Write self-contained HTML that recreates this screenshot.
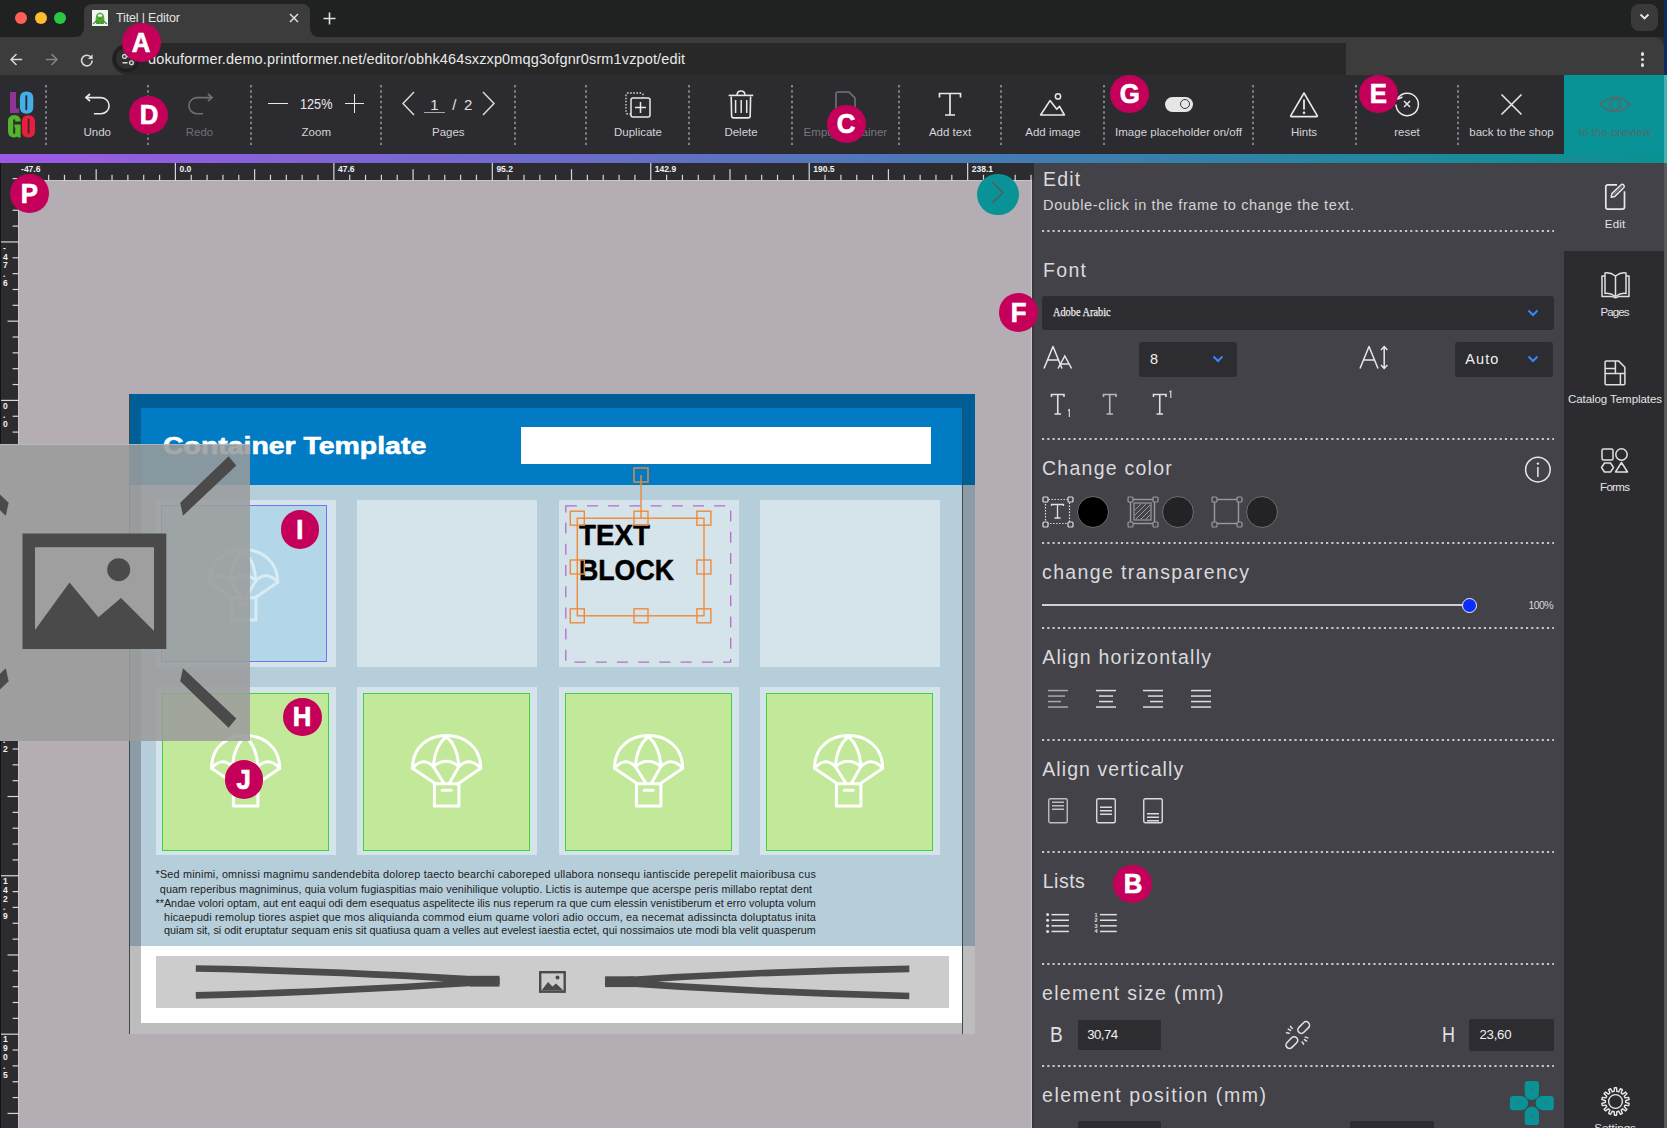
<!DOCTYPE html><html><head><meta charset="utf-8"><style>html,body{margin:0;padding:0;width:1667px;height:1128px;overflow:hidden;position:relative;background:#2c2b30;}</style></head><body><div style="position:absolute;left:0px;top:0px;width:1667px;height:37px;background:#202221;"></div>
<div style="position:absolute;left:1664px;top:0px;width:3px;height:75px;background:#0d2a63;"></div>
<div style="position:absolute;left:15.100000000000001px;top:12.0px;width:12.4px;height:12.4px;border-radius:50%;background:#fe5f57"></div>
<div style="position:absolute;left:34.599999999999994px;top:12.0px;width:12.4px;height:12.4px;border-radius:50%;background:#febc2e"></div>
<div style="position:absolute;left:54.099999999999994px;top:12.0px;width:12.4px;height:12.4px;border-radius:50%;background:#28c840"></div>
<svg style="position:absolute;left:70px;top:0px;" width="256" height="37" viewBox="0 0 256 37"><path d="M4 37 Q14 37 14 27 L14 12 Q14 4 23 4 L231 4 Q240 4 240 12 L240 27 Q240 37 250 37 Z" fill="#3c3c3c"/></svg>
<svg style="position:absolute;left:92px;top:10px;" width="16" height="16" viewBox="0 0 16 16"><rect x="0" y="0" width="16" height="16" fill="#f4f4f4"/><path d="M4 14 Q3 6 5 4 Q8 1 11 4 Q13 6 12 14 Z" fill="#4caf3a"/><path d="M1 14 Q4 12 5 10 M15 14 Q12 12 11 10 M6 14 L6.5 11 M10 14 L9.5 11" stroke="#3c8c2c" stroke-width="1.3" fill="none"/><ellipse cx="8" cy="5.5" rx="2.3" ry="1.2" fill="#fff"/><circle cx="8" cy="8.6" r="0.9" fill="#d22"/></svg>
<div style="position:absolute;left:116.00px;top:11.98px;font-family:'Liberation Sans',sans-serif;font-size:12.5px;line-height:12.5px;font-weight:400;color:#e3e3e3;white-space:pre;letter-spacing:-0.154px;">Titel | Editor</div>
<svg style="position:absolute;left:289px;top:12.6px;" width="10" height="10" viewBox="0 0 10 10"><path d="M1 1 L9 9 M9 1 L1 9" stroke="#e0e0e0" stroke-width="1.5"/></svg>
<svg style="position:absolute;left:322.5px;top:11.5px;" width="13" height="13" viewBox="0 0 13 13"><path d="M6.5 0.5 V12.5 M0.5 6.5 H12.5" stroke="#e0e0e0" stroke-width="1.6"/></svg>
<div style="position:absolute;left:1631px;top:4px;width:27px;height:27px;border-radius:8px;background:#3a3a3a"></div>
<svg style="position:absolute;left:1639px;top:13px;" width="11" height="8" viewBox="0 0 11 8"><path d="M1.5 1.5 L5.5 5.5 L9.5 1.5" stroke="#e8e8e8" stroke-width="1.8" fill="none"/></svg>
<div style="position:absolute;left:0;top:37px;width:1664px;height:38px;background:#3c3c3c;border-top-right-radius:10px"></div>
<svg style="position:absolute;left:10px;top:53px;" width="13" height="13" viewBox="0 0 13 13"><path d="M12.2 6.5 H1.5 M6.5 1 L1 6.5 L6.5 12" stroke="#d8d8d8" stroke-width="1.5" fill="none"/></svg>
<svg style="position:absolute;left:44.8px;top:53px;" width="13" height="13" viewBox="0 0 13 13"><path d="M0.8 6.5 H11.5 M6.5 1 L12 6.5 L6.5 12" stroke="#858585" stroke-width="1.5" fill="none"/></svg>
<svg style="position:absolute;left:79.5px;top:53px;" width="14" height="14" viewBox="0 0 14 14"><path d="M11.3 4.6 A5.3 5.3 0 1 0 12.2 7.6" stroke="#d8d8d8" stroke-width="1.6" fill="none"/><path d="M12.6 1.2 L12.6 5.9 L7.9 5.9 Z" fill="#d8d8d8"/></svg>
<div style="position:absolute;left:112px;top:43px;width:1234px;height:32px;background:#282828;border-top-left-radius:16px;border-bottom-left-radius:16px"></div>
<div style="position:absolute;left:112.5px;top:45px;width:27px;height:27px;box-sizing:border-box;border-radius:50%;background:#303030;border:3px solid #1f1f1f"></div>
<svg style="position:absolute;left:121px;top:53px;" width="15" height="13" viewBox="0 0 15 13"><path d="M6 3.4 H11 M1.5 9.8 H6.5" stroke="#d8d8d8" stroke-width="1.5"/><circle cx="3.4" cy="3.4" r="1.9" stroke="#d8d8d8" stroke-width="1.3" fill="none"/><circle cx="10.4" cy="9.8" r="1.9" stroke="#d8d8d8" stroke-width="1.3" fill="none"/></svg>
<div style="position:absolute;left:148.00px;top:51.77px;font-family:'Liberation Sans',sans-serif;font-size:14.5px;line-height:14.5px;font-weight:400;color:#e8e8e8;white-space:pre;letter-spacing:0.132px;">dokuformer.demo.printformer.net/editor/obhk464sxzxp0mqg3ofgnr0srm1vzpot/edit</div>
<div style="position:absolute;left:1640.8px;top:52.2px;width:3.6px;height:3.6px;border-radius:50%;background:#e0e0e0"></div>
<div style="position:absolute;left:1640.8px;top:57.900000000000006px;width:3.6px;height:3.6px;border-radius:50%;background:#e0e0e0"></div>
<div style="position:absolute;left:1640.8px;top:63.3px;width:3.6px;height:3.6px;border-radius:50%;background:#e0e0e0"></div>
<div style="position:absolute;left:0px;top:75px;width:1664px;height:79px;background:#2c2b30;"></div>
<div style="position:absolute;left:1664px;top:75px;width:3px;height:88px;background:#46b2ae;"></div>
<svg style="position:absolute;left:45px;top:84.9px;" width="2" height="60" viewBox="0 0 2 60"><g fill="#97979b"><rect x="0.2" y="0.00" width="1.6" height="2.4"/><rect x="0.2" y="5.25" width="1.6" height="2.4"/><rect x="0.2" y="10.50" width="1.6" height="2.4"/><rect x="0.2" y="15.75" width="1.6" height="2.4"/><rect x="0.2" y="21.00" width="1.6" height="2.4"/><rect x="0.2" y="26.25" width="1.6" height="2.4"/><rect x="0.2" y="31.50" width="1.6" height="2.4"/><rect x="0.2" y="36.75" width="1.6" height="2.4"/><rect x="0.2" y="42.00" width="1.6" height="2.4"/><rect x="0.2" y="47.25" width="1.6" height="2.4"/><rect x="0.2" y="52.50" width="1.6" height="2.4"/><rect x="0.2" y="57.75" width="1.6" height="2.4"/></g></svg>
<svg style="position:absolute;left:147.3px;top:84.9px;" width="2" height="60" viewBox="0 0 2 60"><g fill="#97979b"><rect x="0.2" y="0.00" width="1.6" height="2.4"/><rect x="0.2" y="5.25" width="1.6" height="2.4"/><rect x="0.2" y="10.50" width="1.6" height="2.4"/><rect x="0.2" y="15.75" width="1.6" height="2.4"/><rect x="0.2" y="21.00" width="1.6" height="2.4"/><rect x="0.2" y="26.25" width="1.6" height="2.4"/><rect x="0.2" y="31.50" width="1.6" height="2.4"/><rect x="0.2" y="36.75" width="1.6" height="2.4"/><rect x="0.2" y="42.00" width="1.6" height="2.4"/><rect x="0.2" y="47.25" width="1.6" height="2.4"/><rect x="0.2" y="52.50" width="1.6" height="2.4"/><rect x="0.2" y="57.75" width="1.6" height="2.4"/></g></svg>
<svg style="position:absolute;left:250.4px;top:84.9px;" width="2" height="60" viewBox="0 0 2 60"><g fill="#97979b"><rect x="0.2" y="0.00" width="1.6" height="2.4"/><rect x="0.2" y="5.25" width="1.6" height="2.4"/><rect x="0.2" y="10.50" width="1.6" height="2.4"/><rect x="0.2" y="15.75" width="1.6" height="2.4"/><rect x="0.2" y="21.00" width="1.6" height="2.4"/><rect x="0.2" y="26.25" width="1.6" height="2.4"/><rect x="0.2" y="31.50" width="1.6" height="2.4"/><rect x="0.2" y="36.75" width="1.6" height="2.4"/><rect x="0.2" y="42.00" width="1.6" height="2.4"/><rect x="0.2" y="47.25" width="1.6" height="2.4"/><rect x="0.2" y="52.50" width="1.6" height="2.4"/><rect x="0.2" y="57.75" width="1.6" height="2.4"/></g></svg>
<svg style="position:absolute;left:380.3px;top:84.9px;" width="2" height="60" viewBox="0 0 2 60"><g fill="#97979b"><rect x="0.2" y="0.00" width="1.6" height="2.4"/><rect x="0.2" y="5.25" width="1.6" height="2.4"/><rect x="0.2" y="10.50" width="1.6" height="2.4"/><rect x="0.2" y="15.75" width="1.6" height="2.4"/><rect x="0.2" y="21.00" width="1.6" height="2.4"/><rect x="0.2" y="26.25" width="1.6" height="2.4"/><rect x="0.2" y="31.50" width="1.6" height="2.4"/><rect x="0.2" y="36.75" width="1.6" height="2.4"/><rect x="0.2" y="42.00" width="1.6" height="2.4"/><rect x="0.2" y="47.25" width="1.6" height="2.4"/><rect x="0.2" y="52.50" width="1.6" height="2.4"/><rect x="0.2" y="57.75" width="1.6" height="2.4"/></g></svg>
<svg style="position:absolute;left:514px;top:84.9px;" width="2" height="60" viewBox="0 0 2 60"><g fill="#97979b"><rect x="0.2" y="0.00" width="1.6" height="2.4"/><rect x="0.2" y="5.25" width="1.6" height="2.4"/><rect x="0.2" y="10.50" width="1.6" height="2.4"/><rect x="0.2" y="15.75" width="1.6" height="2.4"/><rect x="0.2" y="21.00" width="1.6" height="2.4"/><rect x="0.2" y="26.25" width="1.6" height="2.4"/><rect x="0.2" y="31.50" width="1.6" height="2.4"/><rect x="0.2" y="36.75" width="1.6" height="2.4"/><rect x="0.2" y="42.00" width="1.6" height="2.4"/><rect x="0.2" y="47.25" width="1.6" height="2.4"/><rect x="0.2" y="52.50" width="1.6" height="2.4"/><rect x="0.2" y="57.75" width="1.6" height="2.4"/></g></svg>
<svg style="position:absolute;left:585.4px;top:84.9px;" width="2" height="60" viewBox="0 0 2 60"><g fill="#97979b"><rect x="0.2" y="0.00" width="1.6" height="2.4"/><rect x="0.2" y="5.25" width="1.6" height="2.4"/><rect x="0.2" y="10.50" width="1.6" height="2.4"/><rect x="0.2" y="15.75" width="1.6" height="2.4"/><rect x="0.2" y="21.00" width="1.6" height="2.4"/><rect x="0.2" y="26.25" width="1.6" height="2.4"/><rect x="0.2" y="31.50" width="1.6" height="2.4"/><rect x="0.2" y="36.75" width="1.6" height="2.4"/><rect x="0.2" y="42.00" width="1.6" height="2.4"/><rect x="0.2" y="47.25" width="1.6" height="2.4"/><rect x="0.2" y="52.50" width="1.6" height="2.4"/><rect x="0.2" y="57.75" width="1.6" height="2.4"/></g></svg>
<svg style="position:absolute;left:688.4px;top:84.9px;" width="2" height="60" viewBox="0 0 2 60"><g fill="#97979b"><rect x="0.2" y="0.00" width="1.6" height="2.4"/><rect x="0.2" y="5.25" width="1.6" height="2.4"/><rect x="0.2" y="10.50" width="1.6" height="2.4"/><rect x="0.2" y="15.75" width="1.6" height="2.4"/><rect x="0.2" y="21.00" width="1.6" height="2.4"/><rect x="0.2" y="26.25" width="1.6" height="2.4"/><rect x="0.2" y="31.50" width="1.6" height="2.4"/><rect x="0.2" y="36.75" width="1.6" height="2.4"/><rect x="0.2" y="42.00" width="1.6" height="2.4"/><rect x="0.2" y="47.25" width="1.6" height="2.4"/><rect x="0.2" y="52.50" width="1.6" height="2.4"/><rect x="0.2" y="57.75" width="1.6" height="2.4"/></g></svg>
<svg style="position:absolute;left:791.3px;top:84.9px;" width="2" height="60" viewBox="0 0 2 60"><g fill="#97979b"><rect x="0.2" y="0.00" width="1.6" height="2.4"/><rect x="0.2" y="5.25" width="1.6" height="2.4"/><rect x="0.2" y="10.50" width="1.6" height="2.4"/><rect x="0.2" y="15.75" width="1.6" height="2.4"/><rect x="0.2" y="21.00" width="1.6" height="2.4"/><rect x="0.2" y="26.25" width="1.6" height="2.4"/><rect x="0.2" y="31.50" width="1.6" height="2.4"/><rect x="0.2" y="36.75" width="1.6" height="2.4"/><rect x="0.2" y="42.00" width="1.6" height="2.4"/><rect x="0.2" y="47.25" width="1.6" height="2.4"/><rect x="0.2" y="52.50" width="1.6" height="2.4"/><rect x="0.2" y="57.75" width="1.6" height="2.4"/></g></svg>
<svg style="position:absolute;left:897.8px;top:84.9px;" width="2" height="60" viewBox="0 0 2 60"><g fill="#97979b"><rect x="0.2" y="0.00" width="1.6" height="2.4"/><rect x="0.2" y="5.25" width="1.6" height="2.4"/><rect x="0.2" y="10.50" width="1.6" height="2.4"/><rect x="0.2" y="15.75" width="1.6" height="2.4"/><rect x="0.2" y="21.00" width="1.6" height="2.4"/><rect x="0.2" y="26.25" width="1.6" height="2.4"/><rect x="0.2" y="31.50" width="1.6" height="2.4"/><rect x="0.2" y="36.75" width="1.6" height="2.4"/><rect x="0.2" y="42.00" width="1.6" height="2.4"/><rect x="0.2" y="47.25" width="1.6" height="2.4"/><rect x="0.2" y="52.50" width="1.6" height="2.4"/><rect x="0.2" y="57.75" width="1.6" height="2.4"/></g></svg>
<svg style="position:absolute;left:1000.4px;top:84.9px;" width="2" height="60" viewBox="0 0 2 60"><g fill="#97979b"><rect x="0.2" y="0.00" width="1.6" height="2.4"/><rect x="0.2" y="5.25" width="1.6" height="2.4"/><rect x="0.2" y="10.50" width="1.6" height="2.4"/><rect x="0.2" y="15.75" width="1.6" height="2.4"/><rect x="0.2" y="21.00" width="1.6" height="2.4"/><rect x="0.2" y="26.25" width="1.6" height="2.4"/><rect x="0.2" y="31.50" width="1.6" height="2.4"/><rect x="0.2" y="36.75" width="1.6" height="2.4"/><rect x="0.2" y="42.00" width="1.6" height="2.4"/><rect x="0.2" y="47.25" width="1.6" height="2.4"/><rect x="0.2" y="52.50" width="1.6" height="2.4"/><rect x="0.2" y="57.75" width="1.6" height="2.4"/></g></svg>
<svg style="position:absolute;left:1103.2px;top:84.9px;" width="2" height="60" viewBox="0 0 2 60"><g fill="#97979b"><rect x="0.2" y="0.00" width="1.6" height="2.4"/><rect x="0.2" y="5.25" width="1.6" height="2.4"/><rect x="0.2" y="10.50" width="1.6" height="2.4"/><rect x="0.2" y="15.75" width="1.6" height="2.4"/><rect x="0.2" y="21.00" width="1.6" height="2.4"/><rect x="0.2" y="26.25" width="1.6" height="2.4"/><rect x="0.2" y="31.50" width="1.6" height="2.4"/><rect x="0.2" y="36.75" width="1.6" height="2.4"/><rect x="0.2" y="42.00" width="1.6" height="2.4"/><rect x="0.2" y="47.25" width="1.6" height="2.4"/><rect x="0.2" y="52.50" width="1.6" height="2.4"/><rect x="0.2" y="57.75" width="1.6" height="2.4"/></g></svg>
<svg style="position:absolute;left:1251.5px;top:84.9px;" width="2" height="60" viewBox="0 0 2 60"><g fill="#97979b"><rect x="0.2" y="0.00" width="1.6" height="2.4"/><rect x="0.2" y="5.25" width="1.6" height="2.4"/><rect x="0.2" y="10.50" width="1.6" height="2.4"/><rect x="0.2" y="15.75" width="1.6" height="2.4"/><rect x="0.2" y="21.00" width="1.6" height="2.4"/><rect x="0.2" y="26.25" width="1.6" height="2.4"/><rect x="0.2" y="31.50" width="1.6" height="2.4"/><rect x="0.2" y="36.75" width="1.6" height="2.4"/><rect x="0.2" y="42.00" width="1.6" height="2.4"/><rect x="0.2" y="47.25" width="1.6" height="2.4"/><rect x="0.2" y="52.50" width="1.6" height="2.4"/><rect x="0.2" y="57.75" width="1.6" height="2.4"/></g></svg>
<svg style="position:absolute;left:1354.6px;top:84.9px;" width="2" height="60" viewBox="0 0 2 60"><g fill="#97979b"><rect x="0.2" y="0.00" width="1.6" height="2.4"/><rect x="0.2" y="5.25" width="1.6" height="2.4"/><rect x="0.2" y="10.50" width="1.6" height="2.4"/><rect x="0.2" y="15.75" width="1.6" height="2.4"/><rect x="0.2" y="21.00" width="1.6" height="2.4"/><rect x="0.2" y="26.25" width="1.6" height="2.4"/><rect x="0.2" y="31.50" width="1.6" height="2.4"/><rect x="0.2" y="36.75" width="1.6" height="2.4"/><rect x="0.2" y="42.00" width="1.6" height="2.4"/><rect x="0.2" y="47.25" width="1.6" height="2.4"/><rect x="0.2" y="52.50" width="1.6" height="2.4"/><rect x="0.2" y="57.75" width="1.6" height="2.4"/></g></svg>
<svg style="position:absolute;left:1457.3px;top:84.9px;" width="2" height="60" viewBox="0 0 2 60"><g fill="#97979b"><rect x="0.2" y="0.00" width="1.6" height="2.4"/><rect x="0.2" y="5.25" width="1.6" height="2.4"/><rect x="0.2" y="10.50" width="1.6" height="2.4"/><rect x="0.2" y="15.75" width="1.6" height="2.4"/><rect x="0.2" y="21.00" width="1.6" height="2.4"/><rect x="0.2" y="26.25" width="1.6" height="2.4"/><rect x="0.2" y="31.50" width="1.6" height="2.4"/><rect x="0.2" y="36.75" width="1.6" height="2.4"/><rect x="0.2" y="42.00" width="1.6" height="2.4"/><rect x="0.2" y="47.25" width="1.6" height="2.4"/><rect x="0.2" y="52.50" width="1.6" height="2.4"/><rect x="0.2" y="57.75" width="1.6" height="2.4"/></g></svg>
<svg style="position:absolute;left:0px;top:85px;" width="40" height="56" viewBox="0 0 40 56"><g transform="translate(0,-85)"><path d="M10 92 H16 V108.6 H19.1 V113.1 H10 Z" fill="#8b3696"/><path fill-rule="evenodd" fill="#45aee8" d="M26.6 91.5 Q33.3 91.5 33.3 98 V107.3 Q33.3 113.8 26.6 113.8 Q19.9 113.8 19.9 107.3 V98 Q19.9 91.5 26.6 91.5 Z M26.35 95 Q25.4 95 25.4 96.5 V108.8 Q25.4 110.3 26.35 110.3 Q27.3 110.3 27.3 108.8 V96.5 Q27.3 95 26.35 95 Z"/><path fill-rule="evenodd" fill="#55b52a" d="M14.3 115 Q20.6 115 20.6 121.5 V121.6 H15.2 V119.5 H13.2 V133.7 H15.2 V127.5 H14.5 V124.5 H20.6 V137.4 H17.8 L17.5 136.3 Q16.5 137.6 14 137.4 Q8 137.4 8 131 V121.5 Q8 115 14.3 115 Z"/><path fill-rule="evenodd" fill="#ea1e3c" d="M28.45 115.3 Q35 115.3 35 121.8 V131 Q35 137.4 28.45 137.4 Q21.9 137.4 21.9 131 V121.8 Q21.9 115.3 28.45 115.3 Z M28.6 118.6 Q27.7 118.6 27.7 120 V132.6 Q27.7 134 28.6 134 Q29.5 134 29.5 132.6 V120 Q29.5 118.6 28.6 118.6 Z"/></g></svg>
<svg style="position:absolute;left:84px;top:90px;" width="28" height="28" viewBox="0 0 28 28"><path d="M3 7.6 H17 A8.1 8.1 0 0 1 17 23.8 H9.9" stroke="#e8e8e8" stroke-width="1.6" fill="none"/><path d="M6 4 L2 7.6 L6 11.2" stroke="#e8e8e8" stroke-width="1.8" fill="none" stroke-linejoin="miter"/></svg>
<div style="position:absolute;left:83.45px;top:126.53px;font-family:'Liberation Sans',sans-serif;font-size:11.5px;line-height:11.5px;font-weight:400;color:#d4d4d6;white-space:pre;letter-spacing:0.000px;">Undo</div>
<svg style="position:absolute;left:187px;top:90px;" width="28" height="28" viewBox="0 0 28 28"><path d="M24 7.6 H10 A8.1 8.1 0 0 0 10 23.8 H16" stroke="#6f6f74" stroke-width="1.6" fill="none"/><path d="M21 4 L25 7.6 L21 11.2" stroke="#6f6f74" stroke-width="1.8" fill="none"/></svg>
<div style="position:absolute;left:185.75px;top:126.53px;font-family:'Liberation Sans',sans-serif;font-size:11.5px;line-height:11.5px;font-weight:400;color:#6f6f74;white-space:pre;letter-spacing:0.000px;">Redo</div>
<div style="position:absolute;left:267.6px;top:102.8px;width:20.2px;height:1.5px;background:#e8e8e8;"></div>
<div style="position:absolute;left:299.90px;top:96.23px;font-family:'Liberation Sans',sans-serif;font-size:15.5px;line-height:15.5px;font-weight:400;color:#e8e8e8;white-space:pre;letter-spacing:0.000px;transform:scaleX(0.8170);transform-origin:left;">125%</div>
<div style="position:absolute;left:344.9px;top:102.8px;width:19.3px;height:1.5px;background:#e8e8e8;"></div>
<div style="position:absolute;left:353.8px;top:93.5px;width:1.5px;height:19.8px;background:#e8e8e8;"></div>
<div style="position:absolute;left:301.60px;top:126.53px;font-family:'Liberation Sans',sans-serif;font-size:11.5px;line-height:11.5px;font-weight:400;color:#d4d4d6;white-space:pre;letter-spacing:0.000px;">Zoom</div>
<svg style="position:absolute;left:400px;top:90px;" width="17" height="27" viewBox="0 0 17 27"><path d="M14 2 L3 13.5 L14 25" stroke="#d8d8d8" stroke-width="1.5" fill="none"/></svg>
<div style="position:absolute;left:430.23px;top:96.65px;font-family:'Liberation Sans',sans-serif;font-size:15px;line-height:15px;font-weight:400;color:#e0e0e0;white-space:pre;letter-spacing:0.000px;">1</div>
<div style="position:absolute;left:423.8px;top:111.8px;width:21px;height:1px;background:#a8a8a8;"></div>
<div style="position:absolute;left:452.21px;top:96.65px;font-family:'Liberation Sans',sans-serif;font-size:15px;line-height:15px;font-weight:400;color:#e0e0e0;white-space:pre;letter-spacing:0.000px;">/</div>
<div style="position:absolute;left:464.03px;top:96.65px;font-family:'Liberation Sans',sans-serif;font-size:15px;line-height:15px;font-weight:400;color:#e0e0e0;white-space:pre;letter-spacing:0.000px;">2</div>
<svg style="position:absolute;left:479.5px;top:90px;" width="17" height="27" viewBox="0 0 17 27"><path d="M3 2 L14 13.5 L3 25" stroke="#d8d8d8" stroke-width="1.5" fill="none"/></svg>
<div style="position:absolute;left:432.00px;top:126.53px;font-family:'Liberation Sans',sans-serif;font-size:11.5px;line-height:11.5px;font-weight:400;color:#d4d4d6;white-space:pre;letter-spacing:0.000px;">Pages</div>
<svg style="position:absolute;left:623px;top:90px;" width="30" height="29" viewBox="0 0 30 29"><path d="M8 24 H5 Q3 24 3 22 V5 Q3 3 5 3 H18 Q20 3 20 5 V8" stroke="#e0e0e0" stroke-width="1.3" stroke-dasharray="1.5 1.6" fill="none"/><rect x="8" y="8" width="19" height="19" rx="2" stroke="#e8e8e8" stroke-width="1.5" fill="none"/><path d="M17.5 12 V23 M12 17.5 H23" stroke="#e8e8e8" stroke-width="1.5"/></svg>
<div style="position:absolute;left:614.02px;top:126.53px;font-family:'Liberation Sans',sans-serif;font-size:11.5px;line-height:11.5px;font-weight:400;color:#d4d4d6;white-space:pre;letter-spacing:0.000px;">Duplicate</div>
<svg style="position:absolute;left:727px;top:89px;" width="28" height="31" viewBox="0 0 28 31"><path d="M1.6 6.4 H26.2" stroke="#e8e8e8" stroke-width="1.6"/><path d="M10 6.2 Q10 1.9 14 1.9 Q18 1.9 18 6.2" stroke="#e8e8e8" stroke-width="1.5" fill="none"/><path d="M4.2 7.4 L4.6 26.8 Q4.6 28.9 6.7 28.9 H21.1 Q23.2 28.9 23.2 26.8 L23.6 7.4" stroke="#e8e8e8" stroke-width="1.6" fill="none"/><path d="M8.6 10.9 V23.9 M14.2 10.9 V23.9 M19.7 10.9 V23.9" stroke="#e8e8e8" stroke-width="1.5"/></svg>
<div style="position:absolute;left:724.38px;top:126.53px;font-family:'Liberation Sans',sans-serif;font-size:11.5px;line-height:11.5px;font-weight:400;color:#d4d4d6;white-space:pre;letter-spacing:0.000px;">Delete</div>
<svg style="position:absolute;left:833px;top:90px;" width="25" height="30" viewBox="0 0 25 30"><path d="M3 28 V4 Q3 2 5 2 H16 L22 8 V28" stroke="#77767b" stroke-width="1.5" fill="none"/></svg>
<div style="position:absolute;left:803.60px;top:126.53px;font-family:'Liberation Sans',sans-serif;font-size:11.5px;line-height:11.5px;font-weight:400;color:#77767b;white-space:pre;letter-spacing:0.035px;">Empty container</div>
<svg style="position:absolute;left:936px;top:90px;" width="28" height="28" viewBox="0 0 28 28"><path d="M3.5 7.5 V3.5 H24.5 V7.5 M14 3.5 V25 M9 25 H19" stroke="#e8e8e8" stroke-width="1.7" fill="none"/></svg>
<div style="position:absolute;left:928.90px;top:126.53px;font-family:'Liberation Sans',sans-serif;font-size:11.5px;line-height:11.5px;font-weight:400;color:#d4d4d6;white-space:pre;letter-spacing:0.000px;">Add text</div>
<svg style="position:absolute;left:1038px;top:91px;" width="30" height="27" viewBox="0 0 30 27"><path d="M2.6 24 L12 9.6 L18.8 18.2 L21.5 15.3 L26.4 24 Z" stroke="#e8e8e8" stroke-width="1.6" fill="none" stroke-linejoin="round"/><circle cx="20" cy="5.4" r="2.6" stroke="#e8e8e8" stroke-width="1.5" fill="none"/></svg>
<div style="position:absolute;left:1025.31px;top:126.53px;font-family:'Liberation Sans',sans-serif;font-size:11.5px;line-height:11.5px;font-weight:400;color:#d4d4d6;white-space:pre;letter-spacing:0.000px;">Add image</div>
<div style="position:absolute;left:1164.7px;top:96.8px;width:28px;height:15px;border-radius:7.5px;background:#e6e6e6"></div>
<div style="position:absolute;left:1179.7px;top:98.7px;width:8px;height:8px;border-radius:50%;border:1.6px solid #3a3a3f;background:#e6e6e6"></div>
<div style="position:absolute;left:1115.00px;top:126.53px;font-family:'Liberation Sans',sans-serif;font-size:11.5px;line-height:11.5px;font-weight:400;color:#d4d4d6;white-space:pre;letter-spacing:0.026px;">Image placeholder on/off</div>
<svg style="position:absolute;left:1288px;top:90px;" width="32" height="29" viewBox="0 0 32 29"><path d="M16 3 L29.2 25.6 Q29.7 26.6 28.5 26.6 H3.5 Q2.3 26.6 2.8 25.6 Z" stroke="#e8e8e8" stroke-width="1.6" fill="none" stroke-linejoin="round"/><path d="M16 9.6 V19.6" stroke="#e8e8e8" stroke-width="1.8"/><circle cx="16" cy="22.8" r="1.3" fill="#e8e8e8"/></svg>
<div style="position:absolute;left:1290.90px;top:126.53px;font-family:'Liberation Sans',sans-serif;font-size:11.5px;line-height:11.5px;font-weight:400;color:#d4d4d6;white-space:pre;letter-spacing:0.000px;">Hints</div>
<svg style="position:absolute;left:1393px;top:91px;" width="28" height="28" viewBox="0 0 28 28"><path d="M5 7 A11.2 11.2 0 1 1 3 13.5" stroke="#e8e8e8" stroke-width="1.5" fill="none"/><path d="M2 3.5 L4.8 8 L9.5 6" stroke="#e8e8e8" stroke-width="1.5" fill="none"/><path d="M11 10 L17 16 M17 10 L11 16" stroke="#e8e8e8" stroke-width="1.5"/></svg>
<div style="position:absolute;left:1394.21px;top:126.53px;font-family:'Liberation Sans',sans-serif;font-size:11.5px;line-height:11.5px;font-weight:400;color:#d4d4d6;white-space:pre;letter-spacing:0.000px;">reset</div>
<svg style="position:absolute;left:1500px;top:93px;" width="23" height="23" viewBox="0 0 23 23"><path d="M1.5 1.5 L21.5 21.5 M21.5 1.5 L1.5 21.5" stroke="#e8e8e8" stroke-width="1.6"/></svg>
<div style="position:absolute;left:1469.30px;top:126.53px;font-family:'Liberation Sans',sans-serif;font-size:11.5px;line-height:11.5px;font-weight:400;color:#d4d4d6;white-space:pre;letter-spacing:-0.000px;">back to the shop</div>
<div style="position:absolute;left:1564px;top:75px;width:100px;height:79px;background:#0a9396;"></div>
<svg style="position:absolute;left:1598px;top:94px;" width="34" height="21" viewBox="0 0 34 21"><path d="M2 10.5 Q17 -4 32 10.5 Q17 25 2 10.5 Z" stroke="#56676a" stroke-width="1.6" fill="none"/><circle cx="17" cy="10.5" r="5.3" stroke="#56676a" stroke-width="1.6" fill="none"/></svg>
<div style="position:absolute;left:1579.00px;top:126.53px;font-family:'Liberation Sans',sans-serif;font-size:11.5px;line-height:11.5px;font-weight:400;color:#4f6b6c;white-space:pre;letter-spacing:0.030px;">to the preview</div>
<div style="position:absolute;left:0px;top:154px;width:1664px;height:9px;background:linear-gradient(to right,#9d59e6,#0a9191);"></div>
<div style="position:absolute;left:0px;top:163px;width:1034px;height:18px;background:#2c2b30;"></div>
<div style="position:absolute;left:0px;top:163px;width:18.6px;height:965px;background:#2c2b30;"></div>
<div style="position:absolute;left:0px;top:163px;width:1.4px;height:965px;background:#141414;"></div>
<div style="position:absolute;left:1664px;top:163px;width:3px;height:965px;background:#5a595e;"></div>
<div style="position:absolute;left:18.6px;top:181px;width:1012.4px;height:947px;background:#b4adb3;"></div>
<div style="position:absolute;left:17.6px;top:180.2px;width:1014px;height:1px;background:#c9c6c9;"></div>
<div style="position:absolute;left:17.6px;top:180.2px;width:1px;height:948px;background:#c9c6c9;"></div>
<div style="position:absolute;left:1030.9px;top:180.2px;width:1px;height:948px;background:#c9c6c9;"></div>
<div style="position:absolute;left:1031.9px;top:180.2px;width:2px;height:948px;background:#38373c;"></div>
<svg style="position:absolute;left:0;top:0" width="1034" height="182"><g fill="#d6d6d8"><rect x="32.19" y="174.8" width="1.2" height="6"/><rect x="48.04" y="174.8" width="1.2" height="6"/><rect x="63.89" y="174.8" width="1.2" height="6"/><rect x="79.73" y="174.8" width="1.2" height="6"/><rect x="95.58" y="169.2" width="1.2" height="11.5"/><rect x="111.42" y="174.8" width="1.2" height="6"/><rect x="127.27" y="174.8" width="1.2" height="6"/><rect x="143.11" y="174.8" width="1.2" height="6"/><rect x="158.96" y="174.8" width="1.2" height="6"/><rect x="174.80" y="163" width="1.2" height="18"/><rect x="190.65" y="174.8" width="1.2" height="6"/><rect x="206.49" y="174.8" width="1.2" height="6"/><rect x="222.34" y="174.8" width="1.2" height="6"/><rect x="238.18" y="174.8" width="1.2" height="6"/><rect x="254.03" y="169.2" width="1.2" height="11.5"/><rect x="269.87" y="174.8" width="1.2" height="6"/><rect x="285.72" y="174.8" width="1.2" height="6"/><rect x="301.56" y="174.8" width="1.2" height="6"/><rect x="317.41" y="174.8" width="1.2" height="6"/><rect x="333.25" y="163" width="1.2" height="18"/><rect x="349.10" y="174.8" width="1.2" height="6"/><rect x="364.94" y="174.8" width="1.2" height="6"/><rect x="380.79" y="174.8" width="1.2" height="6"/><rect x="396.63" y="174.8" width="1.2" height="6"/><rect x="412.48" y="169.2" width="1.2" height="11.5"/><rect x="428.32" y="174.8" width="1.2" height="6"/><rect x="444.17" y="174.8" width="1.2" height="6"/><rect x="460.01" y="174.8" width="1.2" height="6"/><rect x="475.86" y="174.8" width="1.2" height="6"/><rect x="491.70" y="163" width="1.2" height="18"/><rect x="507.55" y="174.8" width="1.2" height="6"/><rect x="523.39" y="174.8" width="1.2" height="6"/><rect x="539.24" y="174.8" width="1.2" height="6"/><rect x="555.08" y="174.8" width="1.2" height="6"/><rect x="570.92" y="169.2" width="1.2" height="11.5"/><rect x="586.77" y="174.8" width="1.2" height="6"/><rect x="602.62" y="174.8" width="1.2" height="6"/><rect x="618.46" y="174.8" width="1.2" height="6"/><rect x="634.31" y="174.8" width="1.2" height="6"/><rect x="650.15" y="163" width="1.2" height="18"/><rect x="666.00" y="174.8" width="1.2" height="6"/><rect x="681.84" y="174.8" width="1.2" height="6"/><rect x="697.68" y="174.8" width="1.2" height="6"/><rect x="713.53" y="174.8" width="1.2" height="6"/><rect x="729.38" y="169.2" width="1.2" height="11.5"/><rect x="745.22" y="174.8" width="1.2" height="6"/><rect x="761.07" y="174.8" width="1.2" height="6"/><rect x="776.91" y="174.8" width="1.2" height="6"/><rect x="792.76" y="174.8" width="1.2" height="6"/><rect x="808.60" y="163" width="1.2" height="18"/><rect x="824.44" y="174.8" width="1.2" height="6"/><rect x="840.29" y="174.8" width="1.2" height="6"/><rect x="856.13" y="174.8" width="1.2" height="6"/><rect x="871.98" y="174.8" width="1.2" height="6"/><rect x="887.83" y="169.2" width="1.2" height="11.5"/><rect x="903.67" y="174.8" width="1.2" height="6"/><rect x="919.52" y="174.8" width="1.2" height="6"/><rect x="935.36" y="174.8" width="1.2" height="6"/><rect x="951.21" y="174.8" width="1.2" height="6"/><rect x="967.05" y="163" width="1.2" height="18"/><rect x="982.89" y="174.8" width="1.2" height="6"/><rect x="998.74" y="174.8" width="1.2" height="6"/><rect x="1014.59" y="174.8" width="1.2" height="6"/><rect x="1030.43" y="174.8" width="1.2" height="6"/></g></svg>
<div style="position:absolute;left:21.05px;top:164.58px;font-family:'Liberation Sans',sans-serif;font-size:8.5px;line-height:8.5px;font-weight:700;color:#f0f0f0;white-space:pre;letter-spacing:0.000px;">-47.6</div>
<div style="position:absolute;left:179.50px;top:164.58px;font-family:'Liberation Sans',sans-serif;font-size:8.5px;line-height:8.5px;font-weight:700;color:#f0f0f0;white-space:pre;letter-spacing:0.000px;">0.0</div>
<div style="position:absolute;left:337.95px;top:164.58px;font-family:'Liberation Sans',sans-serif;font-size:8.5px;line-height:8.5px;font-weight:700;color:#f0f0f0;white-space:pre;letter-spacing:0.000px;">47.6</div>
<div style="position:absolute;left:496.40px;top:164.58px;font-family:'Liberation Sans',sans-serif;font-size:8.5px;line-height:8.5px;font-weight:700;color:#f0f0f0;white-space:pre;letter-spacing:0.000px;">95.2</div>
<div style="position:absolute;left:654.85px;top:164.58px;font-family:'Liberation Sans',sans-serif;font-size:8.5px;line-height:8.5px;font-weight:700;color:#f0f0f0;white-space:pre;letter-spacing:0.000px;">142.9</div>
<div style="position:absolute;left:813.30px;top:164.58px;font-family:'Liberation Sans',sans-serif;font-size:8.5px;line-height:8.5px;font-weight:700;color:#f0f0f0;white-space:pre;letter-spacing:0.000px;">190.5</div>
<div style="position:absolute;left:971.75px;top:164.58px;font-family:'Liberation Sans',sans-serif;font-size:8.5px;line-height:8.5px;font-weight:700;color:#f0f0f0;white-space:pre;letter-spacing:0.000px;">238.1</div>
<svg style="position:absolute;left:0;top:0" width="19" height="1128"><g fill="#d6d6d8"><rect x="12.6" y="177.97" width="6" height="1.2"/><rect x="12.6" y="193.81" width="6" height="1.2"/><rect x="12.6" y="209.66" width="6" height="1.2"/><rect x="12.6" y="225.50" width="6" height="1.2"/><rect x="1" y="241.35" width="18" height="1.2"/><rect x="12.6" y="257.19" width="6" height="1.2"/><rect x="12.6" y="273.04" width="6" height="1.2"/><rect x="12.6" y="288.88" width="6" height="1.2"/><rect x="12.6" y="304.73" width="6" height="1.2"/><rect x="7.5" y="320.57" width="11" height="1.2"/><rect x="12.6" y="336.42" width="6" height="1.2"/><rect x="12.6" y="352.26" width="6" height="1.2"/><rect x="12.6" y="368.11" width="6" height="1.2"/><rect x="12.6" y="383.95" width="6" height="1.2"/><rect x="1" y="399.80" width="18" height="1.2"/><rect x="12.6" y="415.65" width="6" height="1.2"/><rect x="12.6" y="431.49" width="6" height="1.2"/><rect x="12.6" y="447.34" width="6" height="1.2"/><rect x="12.6" y="463.18" width="6" height="1.2"/><rect x="7.5" y="479.03" width="11" height="1.2"/><rect x="12.6" y="494.87" width="6" height="1.2"/><rect x="12.6" y="510.72" width="6" height="1.2"/><rect x="12.6" y="526.56" width="6" height="1.2"/><rect x="12.6" y="542.40" width="6" height="1.2"/><rect x="1" y="558.25" width="18" height="1.2"/><rect x="12.6" y="574.10" width="6" height="1.2"/><rect x="12.6" y="589.94" width="6" height="1.2"/><rect x="12.6" y="605.79" width="6" height="1.2"/><rect x="12.6" y="621.63" width="6" height="1.2"/><rect x="7.5" y="637.48" width="11" height="1.2"/><rect x="12.6" y="653.32" width="6" height="1.2"/><rect x="12.6" y="669.16" width="6" height="1.2"/><rect x="12.6" y="685.01" width="6" height="1.2"/><rect x="12.6" y="700.86" width="6" height="1.2"/><rect x="1" y="716.70" width="18" height="1.2"/><rect x="12.6" y="732.55" width="6" height="1.2"/><rect x="12.6" y="748.39" width="6" height="1.2"/><rect x="12.6" y="764.24" width="6" height="1.2"/><rect x="12.6" y="780.08" width="6" height="1.2"/><rect x="7.5" y="795.92" width="11" height="1.2"/><rect x="12.6" y="811.77" width="6" height="1.2"/><rect x="12.6" y="827.62" width="6" height="1.2"/><rect x="12.6" y="843.46" width="6" height="1.2"/><rect x="12.6" y="859.31" width="6" height="1.2"/><rect x="1" y="875.15" width="18" height="1.2"/><rect x="12.6" y="891.00" width="6" height="1.2"/><rect x="12.6" y="906.84" width="6" height="1.2"/><rect x="12.6" y="922.68" width="6" height="1.2"/><rect x="12.6" y="938.53" width="6" height="1.2"/><rect x="7.5" y="954.38" width="11" height="1.2"/><rect x="12.6" y="970.22" width="6" height="1.2"/><rect x="12.6" y="986.07" width="6" height="1.2"/><rect x="12.6" y="1001.91" width="6" height="1.2"/><rect x="12.6" y="1017.76" width="6" height="1.2"/><rect x="1" y="1033.60" width="18" height="1.2"/><rect x="12.6" y="1049.44" width="6" height="1.2"/><rect x="12.6" y="1065.29" width="6" height="1.2"/><rect x="12.6" y="1081.13" width="6" height="1.2"/><rect x="12.6" y="1096.98" width="6" height="1.2"/><rect x="7.5" y="1112.83" width="11" height="1.2"/></g></svg>
<div style="position:absolute;left:3.00px;top:243.78px;font-family:'Liberation Sans',sans-serif;font-size:8.5px;line-height:8.5px;font-weight:700;color:#f0f0f0;white-space:pre;letter-spacing:0.000px;">-</div>
<div style="position:absolute;left:3.00px;top:252.58px;font-family:'Liberation Sans',sans-serif;font-size:8.5px;line-height:8.5px;font-weight:700;color:#f0f0f0;white-space:pre;letter-spacing:0.000px;">4</div>
<div style="position:absolute;left:3.00px;top:261.38px;font-family:'Liberation Sans',sans-serif;font-size:8.5px;line-height:8.5px;font-weight:700;color:#f0f0f0;white-space:pre;letter-spacing:0.000px;">7</div>
<div style="position:absolute;left:3.00px;top:270.17px;font-family:'Liberation Sans',sans-serif;font-size:8.5px;line-height:8.5px;font-weight:700;color:#f0f0f0;white-space:pre;letter-spacing:0.000px;">.</div>
<div style="position:absolute;left:3.00px;top:278.97px;font-family:'Liberation Sans',sans-serif;font-size:8.5px;line-height:8.5px;font-weight:700;color:#f0f0f0;white-space:pre;letter-spacing:0.000px;">6</div>
<div style="position:absolute;left:3.00px;top:402.07px;font-family:'Liberation Sans',sans-serif;font-size:8.5px;line-height:8.5px;font-weight:700;color:#f0f0f0;white-space:pre;letter-spacing:0.000px;">0</div>
<div style="position:absolute;left:3.00px;top:410.88px;font-family:'Liberation Sans',sans-serif;font-size:8.5px;line-height:8.5px;font-weight:700;color:#f0f0f0;white-space:pre;letter-spacing:0.000px;">.</div>
<div style="position:absolute;left:3.00px;top:419.68px;font-family:'Liberation Sans',sans-serif;font-size:8.5px;line-height:8.5px;font-weight:700;color:#f0f0f0;white-space:pre;letter-spacing:0.000px;">0</div>
<div style="position:absolute;left:3.00px;top:560.38px;font-family:'Liberation Sans',sans-serif;font-size:8.5px;line-height:8.5px;font-weight:700;color:#f0f0f0;white-space:pre;letter-spacing:0.000px;">4</div>
<div style="position:absolute;left:3.00px;top:569.17px;font-family:'Liberation Sans',sans-serif;font-size:8.5px;line-height:8.5px;font-weight:700;color:#f0f0f0;white-space:pre;letter-spacing:0.000px;">7</div>
<div style="position:absolute;left:3.00px;top:577.98px;font-family:'Liberation Sans',sans-serif;font-size:8.5px;line-height:8.5px;font-weight:700;color:#f0f0f0;white-space:pre;letter-spacing:0.000px;">.</div>
<div style="position:absolute;left:3.00px;top:586.77px;font-family:'Liberation Sans',sans-serif;font-size:8.5px;line-height:8.5px;font-weight:700;color:#f0f0f0;white-space:pre;letter-spacing:0.000px;">6</div>
<div style="position:absolute;left:3.00px;top:718.77px;font-family:'Liberation Sans',sans-serif;font-size:8.5px;line-height:8.5px;font-weight:700;color:#f0f0f0;white-space:pre;letter-spacing:0.000px;">9</div>
<div style="position:absolute;left:3.00px;top:727.57px;font-family:'Liberation Sans',sans-serif;font-size:8.5px;line-height:8.5px;font-weight:700;color:#f0f0f0;white-space:pre;letter-spacing:0.000px;">5</div>
<div style="position:absolute;left:3.00px;top:736.38px;font-family:'Liberation Sans',sans-serif;font-size:8.5px;line-height:8.5px;font-weight:700;color:#f0f0f0;white-space:pre;letter-spacing:0.000px;">.</div>
<div style="position:absolute;left:3.00px;top:745.17px;font-family:'Liberation Sans',sans-serif;font-size:8.5px;line-height:8.5px;font-weight:700;color:#f0f0f0;white-space:pre;letter-spacing:0.000px;">2</div>
<div style="position:absolute;left:3.00px;top:877.07px;font-family:'Liberation Sans',sans-serif;font-size:8.5px;line-height:8.5px;font-weight:700;color:#f0f0f0;white-space:pre;letter-spacing:0.000px;">1</div>
<div style="position:absolute;left:3.00px;top:885.87px;font-family:'Liberation Sans',sans-serif;font-size:8.5px;line-height:8.5px;font-weight:700;color:#f0f0f0;white-space:pre;letter-spacing:0.000px;">4</div>
<div style="position:absolute;left:3.00px;top:894.67px;font-family:'Liberation Sans',sans-serif;font-size:8.5px;line-height:8.5px;font-weight:700;color:#f0f0f0;white-space:pre;letter-spacing:0.000px;">2</div>
<div style="position:absolute;left:3.00px;top:903.47px;font-family:'Liberation Sans',sans-serif;font-size:8.5px;line-height:8.5px;font-weight:700;color:#f0f0f0;white-space:pre;letter-spacing:0.000px;">.</div>
<div style="position:absolute;left:3.00px;top:912.27px;font-family:'Liberation Sans',sans-serif;font-size:8.5px;line-height:8.5px;font-weight:700;color:#f0f0f0;white-space:pre;letter-spacing:0.000px;">9</div>
<div style="position:absolute;left:3.00px;top:1035.38px;font-family:'Liberation Sans',sans-serif;font-size:8.5px;line-height:8.5px;font-weight:700;color:#f0f0f0;white-space:pre;letter-spacing:0.000px;">1</div>
<div style="position:absolute;left:3.00px;top:1044.17px;font-family:'Liberation Sans',sans-serif;font-size:8.5px;line-height:8.5px;font-weight:700;color:#f0f0f0;white-space:pre;letter-spacing:0.000px;">9</div>
<div style="position:absolute;left:3.00px;top:1052.97px;font-family:'Liberation Sans',sans-serif;font-size:8.5px;line-height:8.5px;font-weight:700;color:#f0f0f0;white-space:pre;letter-spacing:0.000px;">0</div>
<div style="position:absolute;left:3.00px;top:1061.78px;font-family:'Liberation Sans',sans-serif;font-size:8.5px;line-height:8.5px;font-weight:700;color:#f0f0f0;white-space:pre;letter-spacing:0.000px;">.</div>
<div style="position:absolute;left:3.00px;top:1070.58px;font-family:'Liberation Sans',sans-serif;font-size:8.5px;line-height:8.5px;font-weight:700;color:#f0f0f0;white-space:pre;letter-spacing:0.000px;">5</div>
<div style="position:absolute;left:977.3px;top:173.6px;width:41.4px;height:41.4px;border-radius:50%;background:#0a9396"></div>
<svg style="position:absolute;left:990px;top:180px;" width="16" height="26" viewBox="0 0 16 26"><path d="M2.4 2.3 L12.8 12.7 L2.4 22.8" stroke="#555b5c" stroke-width="1.4" fill="none"/></svg>
<div style="position:absolute;left:129px;top:394px;width:846px;height:640px;background:#8b9ca7;"></div>
<div style="position:absolute;left:129px;top:394px;width:846px;height:91px;background:#005e97;"></div>
<div style="position:absolute;left:129px;top:946px;width:846px;height:88px;background:#bdbdbd;"></div>
<div style="position:absolute;left:141.4px;top:407.5px;width:821.4px;height:615.5px;background:#b6ced9;"></div>
<div style="position:absolute;left:141.4px;top:407.5px;width:821.4px;height:77.5px;background:#027bc5;"></div>
<div style="position:absolute;left:141.4px;top:946px;width:821.4px;height:77px;background:#ffffff;"></div>
<div style="position:absolute;left:962.2px;top:407.5px;width:1.3px;height:626.5px;background:#3e4a52;"></div>
<div style="position:absolute;left:129px;top:394px;width:1.2px;height:640px;background:#3e4a52;"></div>
<div style="position:absolute;left:162.80px;top:433.90px;font-family:'Liberation Sans',sans-serif;font-size:24px;line-height:24px;font-weight:700;color:#ffffff;white-space:pre;letter-spacing:0.000px;transform:scaleX(1.1842);transform-origin:left;-webkit-text-stroke:0.6px #fff;">Container Template</div>
<div style="position:absolute;left:520.5px;top:426.8px;width:410.2px;height:37.4px;background:#ffffff;"></div>
<div style="position:absolute;left:156px;top:499.6px;width:180px;height:167.8px;background:#d5e3eb;"></div>
<div style="position:absolute;left:156px;top:687.2px;width:180px;height:168.3px;background:#d5e3eb;"></div>
<div style="position:absolute;left:357.1px;top:499.6px;width:180px;height:167.8px;background:#d5e3eb;"></div>
<div style="position:absolute;left:357.1px;top:687.2px;width:180px;height:168.3px;background:#d5e3eb;"></div>
<div style="position:absolute;left:559px;top:499.6px;width:180px;height:167.8px;background:#d5e3eb;"></div>
<div style="position:absolute;left:559px;top:687.2px;width:180px;height:168.3px;background:#d5e3eb;"></div>
<div style="position:absolute;left:759.8px;top:499.6px;width:180px;height:167.8px;background:#d5e3eb;"></div>
<div style="position:absolute;left:759.8px;top:687.2px;width:180px;height:168.3px;background:#d5e3eb;"></div>
<div style="position:absolute;left:161.4px;top:504.7px;width:166.1px;height:157.6px;background:#b3d7e8;box-sizing:border-box;border:1.5px solid #7373f5;"></div>
<div style="position:absolute;left:162px;top:692.8px;width:167px;height:158px;background:#c2e899;box-sizing:border-box;border:1.3px solid #3fd33f;"></div>
<div style="position:absolute;left:363.1px;top:692.8px;width:167px;height:158px;background:#c2e899;box-sizing:border-box;border:1.3px solid #3fd33f;"></div>
<div style="position:absolute;left:565px;top:692.8px;width:167px;height:158px;background:#c2e899;box-sizing:border-box;border:1.3px solid #3fd33f;"></div>
<div style="position:absolute;left:765.8px;top:692.8px;width:167px;height:158px;background:#c2e899;box-sizing:border-box;border:1.3px solid #3fd33f;"></div>
<svg style="position:absolute;left:206.0px;top:546px;opacity:0.5;" width="76" height="77" viewBox="0 0 76 77"><g transform="translate(2,2)" fill="none" stroke="#ffffff" stroke-width="3.0" stroke-linejoin="round" stroke-linecap="round"><path d="M1.5 34.3 C1.5 12 18 1.5 35.3 1.5 C52.6 1.5 69.7 12 69.7 34.3"/><path d="M1.5 34.3 Q11.9 22 22.3 32.5 Q35.1 22 47.9 32.5 Q58.8 22 69.7 34.3"/><path d="M35.3 2.5 Q24 12 22.3 32.5 M35.3 2.5 Q46.6 12 47.9 32.5"/><path d="M1.5 34.3 L24.5 49.8 M22.3 32.5 L32.5 48.6 M47.9 32.5 L38.8 48.6 M69.7 34.3 L47.1 49.8"/><rect x="23.4" y="49.8" width="24.5" height="22.2"/><path d="M31.2 56.2 H40.2"/></g></svg>
<svg style="position:absolute;left:207.5px;top:732.3px;opacity:1.0;" width="76" height="77" viewBox="0 0 76 77"><g transform="translate(2,2)" fill="none" stroke="#ffffff" stroke-width="3.0" stroke-linejoin="round" stroke-linecap="round"><path d="M1.5 34.3 C1.5 12 18 1.5 35.3 1.5 C52.6 1.5 69.7 12 69.7 34.3"/><path d="M1.5 34.3 Q11.9 22 22.3 32.5 Q35.1 22 47.9 32.5 Q58.8 22 69.7 34.3"/><path d="M35.3 2.5 Q24 12 22.3 32.5 M35.3 2.5 Q46.6 12 47.9 32.5"/><path d="M1.5 34.3 L24.5 49.8 M22.3 32.5 L32.5 48.6 M47.9 32.5 L38.8 48.6 M69.7 34.3 L47.1 49.8"/><rect x="23.4" y="49.8" width="24.5" height="22.2"/><path d="M31.2 56.2 H40.2"/></g></svg>
<svg style="position:absolute;left:408.6px;top:732.3px;opacity:1.0;" width="76" height="77" viewBox="0 0 76 77"><g transform="translate(2,2)" fill="none" stroke="#ffffff" stroke-width="3.0" stroke-linejoin="round" stroke-linecap="round"><path d="M1.5 34.3 C1.5 12 18 1.5 35.3 1.5 C52.6 1.5 69.7 12 69.7 34.3"/><path d="M1.5 34.3 Q11.9 22 22.3 32.5 Q35.1 22 47.9 32.5 Q58.8 22 69.7 34.3"/><path d="M35.3 2.5 Q24 12 22.3 32.5 M35.3 2.5 Q46.6 12 47.9 32.5"/><path d="M1.5 34.3 L24.5 49.8 M22.3 32.5 L32.5 48.6 M47.9 32.5 L38.8 48.6 M69.7 34.3 L47.1 49.8"/><rect x="23.4" y="49.8" width="24.5" height="22.2"/><path d="M31.2 56.2 H40.2"/></g></svg>
<svg style="position:absolute;left:610.5px;top:732.3px;opacity:1.0;" width="76" height="77" viewBox="0 0 76 77"><g transform="translate(2,2)" fill="none" stroke="#ffffff" stroke-width="3.0" stroke-linejoin="round" stroke-linecap="round"><path d="M1.5 34.3 C1.5 12 18 1.5 35.3 1.5 C52.6 1.5 69.7 12 69.7 34.3"/><path d="M1.5 34.3 Q11.9 22 22.3 32.5 Q35.1 22 47.9 32.5 Q58.8 22 69.7 34.3"/><path d="M35.3 2.5 Q24 12 22.3 32.5 M35.3 2.5 Q46.6 12 47.9 32.5"/><path d="M1.5 34.3 L24.5 49.8 M22.3 32.5 L32.5 48.6 M47.9 32.5 L38.8 48.6 M69.7 34.3 L47.1 49.8"/><rect x="23.4" y="49.8" width="24.5" height="22.2"/><path d="M31.2 56.2 H40.2"/></g></svg>
<svg style="position:absolute;left:811.3px;top:732.3px;opacity:1.0;" width="76" height="77" viewBox="0 0 76 77"><g transform="translate(2,2)" fill="none" stroke="#ffffff" stroke-width="3.0" stroke-linejoin="round" stroke-linecap="round"><path d="M1.5 34.3 C1.5 12 18 1.5 35.3 1.5 C52.6 1.5 69.7 12 69.7 34.3"/><path d="M1.5 34.3 Q11.9 22 22.3 32.5 Q35.1 22 47.9 32.5 Q58.8 22 69.7 34.3"/><path d="M35.3 2.5 Q24 12 22.3 32.5 M35.3 2.5 Q46.6 12 47.9 32.5"/><path d="M1.5 34.3 L24.5 49.8 M22.3 32.5 L32.5 48.6 M47.9 32.5 L38.8 48.6 M69.7 34.3 L47.1 49.8"/><rect x="23.4" y="49.8" width="24.5" height="22.2"/><path d="M31.2 56.2 H40.2"/></g></svg>
<svg style="position:absolute;left:565px;top:505px;" width="167" height="158" viewBox="0 0 167 158"><rect x="0.8" y="0.8" width="164.9" height="156.4" fill="none" stroke="#b46ccc" stroke-width="1.3" stroke-dasharray="11 10.2"/></svg>
<div style="position:absolute;left:579.00px;top:519.62px;font-family:'Liberation Sans',sans-serif;font-size:29.5px;line-height:29.5px;font-weight:700;color:#000000;white-space:pre;letter-spacing:0.000px;transform:scaleX(0.9416);transform-origin:left;-webkit-text-stroke:0.5px #000;">TEXT</div>
<div style="position:absolute;left:578.50px;top:554.52px;font-family:'Liberation Sans',sans-serif;font-size:29.5px;line-height:29.5px;font-weight:700;color:#000000;white-space:pre;letter-spacing:0.000px;transform:scaleX(0.9057);transform-origin:left;-webkit-text-stroke:0.5px #000;">BLOCK</div>
<svg style="position:absolute;left:565px;top:475px;overflow:visible;" width="155" height="150" viewBox="0 0 155 150"><rect x="12.3" y="43.2" width="126.7" height="97.6" fill="none" stroke="#ee8a3c" stroke-width="1.4"/><path d="M76 0 V43" stroke="#ee8a3c" stroke-width="1.4"/><rect x="5.300000000000001" y="36.2" width="14" height="14" fill="none" stroke="#ee8a3c" stroke-width="1.4"/><rect x="69" y="36.2" width="14" height="14" fill="none" stroke="#ee8a3c" stroke-width="1.4"/><rect x="131.9" y="36.2" width="14" height="14" fill="none" stroke="#ee8a3c" stroke-width="1.4"/><rect x="5.300000000000001" y="85" width="14" height="14" fill="none" stroke="#ee8a3c" stroke-width="1.4"/><rect x="131.9" y="85" width="14" height="14" fill="none" stroke="#ee8a3c" stroke-width="1.4"/><rect x="5.300000000000001" y="133.8" width="14" height="14" fill="none" stroke="#ee8a3c" stroke-width="1.4"/><rect x="69" y="133.8" width="14" height="14" fill="none" stroke="#ee8a3c" stroke-width="1.4"/><rect x="131.9" y="133.8" width="14" height="14" fill="none" stroke="#ee8a3c" stroke-width="1.4"/><rect x="69" y="-7" width="14" height="14" fill="none" stroke="#ee8a3c" stroke-width="1.4"/></svg>
<div style="position:absolute;left:155.50px;top:869.42px;font-family:'Liberation Sans',sans-serif;font-size:10.8px;line-height:10.8px;font-weight:400;color:#1c1c1c;white-space:pre;letter-spacing:0.215px;">*Sed minimi, omnissi magnimu sandendebita dolorep taecto bearchi caboreped ullabora nonsequ iantiscide perepelit maioribusa cus</div>
<div style="position:absolute;left:159.80px;top:883.72px;font-family:'Liberation Sans',sans-serif;font-size:10.8px;line-height:10.8px;font-weight:400;color:#1c1c1c;white-space:pre;letter-spacing:0.099px;">quam reperibus magniminus, quia volum fugiaspitias maio venihilique voluptio. Lictis is autempe que acerspe peris millabo reptat dent</div>
<div style="position:absolute;left:155.50px;top:897.52px;font-family:'Liberation Sans',sans-serif;font-size:10.8px;line-height:10.8px;font-weight:400;color:#1c1c1c;white-space:pre;letter-spacing:0.005px;">**Andae volori optam, aut ent eaqui odi dem esequatus aspelitecte ilis nus reperum ra que cum elessin venistiberum et erro volupta volum</div>
<div style="position:absolute;left:164.00px;top:911.52px;font-family:'Liberation Sans',sans-serif;font-size:10.8px;line-height:10.8px;font-weight:400;color:#1c1c1c;white-space:pre;letter-spacing:0.183px;">hicaepudi remolup tiores aspiet que mos aliquianda commod eium quame volori adio occum, ea necemat adissincta doluptatus inita</div>
<div style="position:absolute;left:164.00px;top:925.42px;font-family:'Liberation Sans',sans-serif;font-size:10.8px;line-height:10.8px;font-weight:400;color:#1c1c1c;white-space:pre;letter-spacing:0.018px;">quiam sit, si odit eruptatur sequam enis sit quatiusa quam a velles aut evelest iaestia ectet, qui nossimaios ute modi bla velit quasperum</div>
<div style="position:absolute;left:156.2px;top:956px;width:792.4px;height:52.2px;background:#cccccc;"></div>
<svg style="position:absolute;left:150px;top:950px;" width="800" height="60" viewBox="0 0 800 60"><g fill="none" stroke="#4b4b4b" stroke-width="6.6" stroke-linecap="butt" stroke-linejoin="round"><path d="M45.8 18.5 Q186 21 349.5 31 M45.8 45.4 Q186 42 349.5 31"/><path d="M759.3 18.9 Q605 21.5 455.1 31.6 M759.3 46 Q605 42.5 455.1 31.6"/></g><rect x="320" y="25.8" width="29.5" height="10.8" fill="#4b4b4b"/><rect x="455.1" y="26.3" width="29" height="10.8" fill="#4b4b4b"/></svg>
<svg style="position:absolute;left:539px;top:971.4px;" width="27" height="22" viewBox="0 0 27 22"><rect x="1.2" y="1.2" width="24.5" height="19.5" fill="none" stroke="#4b4b4b" stroke-width="2.4"/><path d="M2.5 19.5 L9 11 L13.5 15.5 L17 12.5 L24.5 19.5 Z" fill="#4b4b4b"/><circle cx="18.5" cy="6.5" r="2" fill="#4b4b4b"/></svg>
<div style="position:absolute;left:0px;top:444px;width:18.6px;height:297px;background:#b4adb3;"></div>
<div style="position:absolute;left:0;top:444px;width:249.6px;height:297px;background:rgba(155,156,156,0.88)"></div>
<div style="position:absolute;left:0px;top:444px;width:249.6px;height:1.2px;background:rgba(200,206,206,0.55);"></div>
<svg style="position:absolute;left:0px;top:444px;" width="250" height="297" viewBox="0 0 250 297"><rect x="22.5" y="89.5" width="143.8" height="115.5" fill="#4a4a4a"/><rect x="35" y="103.2" width="119" height="90" fill="#a09fa0"/><path d="M35 186 L69.5 138.4 L98.4 173.3 L121 154 L154 187 L154 196 L35 196 Z" fill="#4a4a4a"/><circle cx="118.7" cy="125.7" r="11.5" fill="#4a4a4a"/><path d="M228.6 12.2 L236.3 21.4 L183.0 71.7 L180.2 58.7 Z" fill="#4a4a4a"/><path d="M228.6 283.8 L236.3 274.6 L183.0 224.3 L180.2 237.3 Z" fill="#4a4a4a"/><path d="M-39.8 12.2 L-47.5 21.4 L5.8 71.7 L8.6 58.7 Z" fill="#4a4a4a"/><path d="M-39.8 283.8 L-47.5 274.6 L5.8 224.3 L8.6 237.3 Z" fill="#4a4a4a"/></svg>
<div style="position:absolute;left:1033.9px;top:163px;width:530.1px;height:965px;background:#434248;"></div>
<div style="position:absolute;left:1564px;top:163px;width:100px;height:88px;background:#434248;"></div>
<div style="position:absolute;left:1564px;top:251px;width:100px;height:877px;background:#2c2b30;"></div>
<div style="position:absolute;left:1043.00px;top:169.73px;font-family:'Liberation Sans',sans-serif;font-size:19.5px;line-height:19.5px;font-weight:400;color:#dadadc;white-space:pre;letter-spacing:1.197px;">Edit</div>
<div style="position:absolute;left:1043.00px;top:197.89px;font-family:'Liberation Sans',sans-serif;font-size:14.6px;line-height:14.6px;font-weight:400;color:#d4d4d6;white-space:pre;letter-spacing:0.597px;">Double-click in the frame to change the text.</div>
<svg style="position:absolute;left:1042px;top:229.5px;" width="512" height="2" viewBox="0 0 512 2"><g fill="#c6c6c9"><rect x="0.00" y="0" width="2.2" height="2"/><rect x="5.26" y="0" width="2.2" height="2"/><rect x="10.52" y="0" width="2.2" height="2"/><rect x="15.78" y="0" width="2.2" height="2"/><rect x="21.04" y="0" width="2.2" height="2"/><rect x="26.30" y="0" width="2.2" height="2"/><rect x="31.56" y="0" width="2.2" height="2"/><rect x="36.82" y="0" width="2.2" height="2"/><rect x="42.08" y="0" width="2.2" height="2"/><rect x="47.34" y="0" width="2.2" height="2"/><rect x="52.60" y="0" width="2.2" height="2"/><rect x="57.86" y="0" width="2.2" height="2"/><rect x="63.12" y="0" width="2.2" height="2"/><rect x="68.38" y="0" width="2.2" height="2"/><rect x="73.64" y="0" width="2.2" height="2"/><rect x="78.90" y="0" width="2.2" height="2"/><rect x="84.16" y="0" width="2.2" height="2"/><rect x="89.42" y="0" width="2.2" height="2"/><rect x="94.68" y="0" width="2.2" height="2"/><rect x="99.94" y="0" width="2.2" height="2"/><rect x="105.20" y="0" width="2.2" height="2"/><rect x="110.46" y="0" width="2.2" height="2"/><rect x="115.72" y="0" width="2.2" height="2"/><rect x="120.98" y="0" width="2.2" height="2"/><rect x="126.24" y="0" width="2.2" height="2"/><rect x="131.50" y="0" width="2.2" height="2"/><rect x="136.76" y="0" width="2.2" height="2"/><rect x="142.02" y="0" width="2.2" height="2"/><rect x="147.28" y="0" width="2.2" height="2"/><rect x="152.54" y="0" width="2.2" height="2"/><rect x="157.80" y="0" width="2.2" height="2"/><rect x="163.06" y="0" width="2.2" height="2"/><rect x="168.32" y="0" width="2.2" height="2"/><rect x="173.58" y="0" width="2.2" height="2"/><rect x="178.84" y="0" width="2.2" height="2"/><rect x="184.10" y="0" width="2.2" height="2"/><rect x="189.36" y="0" width="2.2" height="2"/><rect x="194.62" y="0" width="2.2" height="2"/><rect x="199.88" y="0" width="2.2" height="2"/><rect x="205.14" y="0" width="2.2" height="2"/><rect x="210.40" y="0" width="2.2" height="2"/><rect x="215.66" y="0" width="2.2" height="2"/><rect x="220.92" y="0" width="2.2" height="2"/><rect x="226.18" y="0" width="2.2" height="2"/><rect x="231.44" y="0" width="2.2" height="2"/><rect x="236.70" y="0" width="2.2" height="2"/><rect x="241.96" y="0" width="2.2" height="2"/><rect x="247.22" y="0" width="2.2" height="2"/><rect x="252.48" y="0" width="2.2" height="2"/><rect x="257.74" y="0" width="2.2" height="2"/><rect x="263.00" y="0" width="2.2" height="2"/><rect x="268.26" y="0" width="2.2" height="2"/><rect x="273.52" y="0" width="2.2" height="2"/><rect x="278.78" y="0" width="2.2" height="2"/><rect x="284.04" y="0" width="2.2" height="2"/><rect x="289.30" y="0" width="2.2" height="2"/><rect x="294.56" y="0" width="2.2" height="2"/><rect x="299.82" y="0" width="2.2" height="2"/><rect x="305.08" y="0" width="2.2" height="2"/><rect x="310.34" y="0" width="2.2" height="2"/><rect x="315.60" y="0" width="2.2" height="2"/><rect x="320.86" y="0" width="2.2" height="2"/><rect x="326.12" y="0" width="2.2" height="2"/><rect x="331.38" y="0" width="2.2" height="2"/><rect x="336.64" y="0" width="2.2" height="2"/><rect x="341.90" y="0" width="2.2" height="2"/><rect x="347.16" y="0" width="2.2" height="2"/><rect x="352.42" y="0" width="2.2" height="2"/><rect x="357.68" y="0" width="2.2" height="2"/><rect x="362.94" y="0" width="2.2" height="2"/><rect x="368.20" y="0" width="2.2" height="2"/><rect x="373.46" y="0" width="2.2" height="2"/><rect x="378.72" y="0" width="2.2" height="2"/><rect x="383.98" y="0" width="2.2" height="2"/><rect x="389.24" y="0" width="2.2" height="2"/><rect x="394.50" y="0" width="2.2" height="2"/><rect x="399.76" y="0" width="2.2" height="2"/><rect x="405.02" y="0" width="2.2" height="2"/><rect x="410.28" y="0" width="2.2" height="2"/><rect x="415.54" y="0" width="2.2" height="2"/><rect x="420.80" y="0" width="2.2" height="2"/><rect x="426.06" y="0" width="2.2" height="2"/><rect x="431.32" y="0" width="2.2" height="2"/><rect x="436.58" y="0" width="2.2" height="2"/><rect x="441.84" y="0" width="2.2" height="2"/><rect x="447.10" y="0" width="2.2" height="2"/><rect x="452.36" y="0" width="2.2" height="2"/><rect x="457.62" y="0" width="2.2" height="2"/><rect x="462.88" y="0" width="2.2" height="2"/><rect x="468.14" y="0" width="2.2" height="2"/><rect x="473.40" y="0" width="2.2" height="2"/><rect x="478.66" y="0" width="2.2" height="2"/><rect x="483.92" y="0" width="2.2" height="2"/><rect x="489.18" y="0" width="2.2" height="2"/><rect x="494.44" y="0" width="2.2" height="2"/><rect x="499.70" y="0" width="2.2" height="2"/><rect x="504.96" y="0" width="2.2" height="2"/><rect x="510.22" y="0" width="2.2" height="2"/></g></svg>
<div style="position:absolute;left:1043.00px;top:260.73px;font-family:'Liberation Sans',sans-serif;font-size:19.5px;line-height:19.5px;font-weight:400;color:#dadadc;white-space:pre;letter-spacing:1.323px;">Font</div>
<div style="position:absolute;left:1042px;top:295.7px;width:511.5px;height:34.8px;border-radius:3px;background:#2d2c31"></div>
<div style="position:absolute;left:1052.60px;top:306.85px;font-family:'Liberation Serif',serif;font-size:11.5px;line-height:11.5px;font-weight:400;color:#ececec;white-space:pre;letter-spacing:0.000px;transform:scaleX(0.8972);transform-origin:left;-webkit-text-stroke:0.25px #ececec;">Adobe Arabic</div>
<svg style="position:absolute;left:1526.7px;top:309.3px;" width="12" height="8" viewBox="0 0 12 8"><path d="M1.5 1.5 L6 6 L10.5 1.5" stroke="#3b86f7" stroke-width="2" fill="none"/></svg>
<svg style="position:absolute;left:1042px;top:344px;" width="32" height="27" viewBox="0 0 32 27"><path d="M2 24.5 L11 2.5 L20 24.5 M5.5 16 H16.5" stroke="#e8e8e8" stroke-width="1.5" fill="none" stroke-linejoin="round"/><path d="M16 24.5 L22.8 12 L29.6 24.5 M18.6 20 H27" stroke="#e8e8e8" stroke-width="1.5" fill="none"/></svg>
<div style="position:absolute;left:1139.3px;top:341.7px;width:98px;height:34.9px;border-radius:3px;background:#2d2c31"></div>
<div style="position:absolute;left:1149.90px;top:351.68px;font-family:'Liberation Sans',sans-serif;font-size:14.5px;line-height:14.5px;font-weight:400;color:#f0f0f0;white-space:pre;letter-spacing:0.000px;">8</div>
<svg style="position:absolute;left:1211.7px;top:355.4px;" width="12" height="8" viewBox="0 0 12 8"><path d="M1.5 1.5 L6 6 L10.5 1.5" stroke="#3b86f7" stroke-width="2" fill="none"/></svg>
<svg style="position:absolute;left:1358px;top:344px;" width="30" height="27" viewBox="0 0 30 27"><path d="M2 24.5 L11 2.5 L20 24.5 M5.5 16 H16.5" stroke="#e8e8e8" stroke-width="1.5" fill="none" stroke-linejoin="round"/><path d="M26.2 3 V24 M23 6 L26.2 2.5 L29.4 6 M23 21 L26.2 24.5 L29.4 21" stroke="#e8e8e8" stroke-width="1.5" fill="none"/></svg>
<div style="position:absolute;left:1455.2px;top:341.7px;width:98.3px;height:34.9px;border-radius:3px;background:#2d2c31"></div>
<div style="position:absolute;left:1465.20px;top:351.68px;font-family:'Liberation Sans',sans-serif;font-size:14.5px;line-height:14.5px;font-weight:400;color:#f0f0f0;white-space:pre;letter-spacing:1.119px;">Auto</div>
<svg style="position:absolute;left:1527.2px;top:355.4px;" width="12" height="8" viewBox="0 0 12 8"><path d="M1.5 1.5 L6 6 L10.5 1.5" stroke="#3b86f7" stroke-width="2" fill="none"/></svg>
<svg style="position:absolute;left:1049.5px;top:393px;" width="22" height="26" viewBox="0 0 22 26"><path d="M1.5 4 V1.5 H14 V4 M7.75 1.5 V21 M4.5 21 H11" stroke="#e0e0e0" stroke-width="1.6" fill="none"/><path d="M18 17.5 L19.3 16.5 V24" stroke="#e0e0e0" stroke-width="1.1" fill="none"/></svg>
<svg style="position:absolute;left:1101.5px;top:393px;" width="18" height="24" viewBox="0 0 18 24"><path d="M1.5 4 V1.5 H14 V4 M7.75 1.5 V21 M4.5 21 H11" stroke="#b8b8bb" stroke-width="1.6" fill="none"/></svg>
<svg style="position:absolute;left:1152.2px;top:389px;" width="22" height="28" viewBox="0 0 22 28"><g transform="translate(0,4)"><path d="M1.5 4 V1.5 H14 V4 M7.75 1.5 V21 M4.5 21 H11" stroke="#e0e0e0" stroke-width="1.6" fill="none"/></g><path d="M17.5 3 L18.8 2 V9" stroke="#e0e0e0" stroke-width="1.1" fill="none"/></svg>
<svg style="position:absolute;left:1042px;top:438.3px;" width="512" height="2" viewBox="0 0 512 2"><g fill="#c6c6c9"><rect x="0.00" y="0" width="2.2" height="2"/><rect x="5.26" y="0" width="2.2" height="2"/><rect x="10.52" y="0" width="2.2" height="2"/><rect x="15.78" y="0" width="2.2" height="2"/><rect x="21.04" y="0" width="2.2" height="2"/><rect x="26.30" y="0" width="2.2" height="2"/><rect x="31.56" y="0" width="2.2" height="2"/><rect x="36.82" y="0" width="2.2" height="2"/><rect x="42.08" y="0" width="2.2" height="2"/><rect x="47.34" y="0" width="2.2" height="2"/><rect x="52.60" y="0" width="2.2" height="2"/><rect x="57.86" y="0" width="2.2" height="2"/><rect x="63.12" y="0" width="2.2" height="2"/><rect x="68.38" y="0" width="2.2" height="2"/><rect x="73.64" y="0" width="2.2" height="2"/><rect x="78.90" y="0" width="2.2" height="2"/><rect x="84.16" y="0" width="2.2" height="2"/><rect x="89.42" y="0" width="2.2" height="2"/><rect x="94.68" y="0" width="2.2" height="2"/><rect x="99.94" y="0" width="2.2" height="2"/><rect x="105.20" y="0" width="2.2" height="2"/><rect x="110.46" y="0" width="2.2" height="2"/><rect x="115.72" y="0" width="2.2" height="2"/><rect x="120.98" y="0" width="2.2" height="2"/><rect x="126.24" y="0" width="2.2" height="2"/><rect x="131.50" y="0" width="2.2" height="2"/><rect x="136.76" y="0" width="2.2" height="2"/><rect x="142.02" y="0" width="2.2" height="2"/><rect x="147.28" y="0" width="2.2" height="2"/><rect x="152.54" y="0" width="2.2" height="2"/><rect x="157.80" y="0" width="2.2" height="2"/><rect x="163.06" y="0" width="2.2" height="2"/><rect x="168.32" y="0" width="2.2" height="2"/><rect x="173.58" y="0" width="2.2" height="2"/><rect x="178.84" y="0" width="2.2" height="2"/><rect x="184.10" y="0" width="2.2" height="2"/><rect x="189.36" y="0" width="2.2" height="2"/><rect x="194.62" y="0" width="2.2" height="2"/><rect x="199.88" y="0" width="2.2" height="2"/><rect x="205.14" y="0" width="2.2" height="2"/><rect x="210.40" y="0" width="2.2" height="2"/><rect x="215.66" y="0" width="2.2" height="2"/><rect x="220.92" y="0" width="2.2" height="2"/><rect x="226.18" y="0" width="2.2" height="2"/><rect x="231.44" y="0" width="2.2" height="2"/><rect x="236.70" y="0" width="2.2" height="2"/><rect x="241.96" y="0" width="2.2" height="2"/><rect x="247.22" y="0" width="2.2" height="2"/><rect x="252.48" y="0" width="2.2" height="2"/><rect x="257.74" y="0" width="2.2" height="2"/><rect x="263.00" y="0" width="2.2" height="2"/><rect x="268.26" y="0" width="2.2" height="2"/><rect x="273.52" y="0" width="2.2" height="2"/><rect x="278.78" y="0" width="2.2" height="2"/><rect x="284.04" y="0" width="2.2" height="2"/><rect x="289.30" y="0" width="2.2" height="2"/><rect x="294.56" y="0" width="2.2" height="2"/><rect x="299.82" y="0" width="2.2" height="2"/><rect x="305.08" y="0" width="2.2" height="2"/><rect x="310.34" y="0" width="2.2" height="2"/><rect x="315.60" y="0" width="2.2" height="2"/><rect x="320.86" y="0" width="2.2" height="2"/><rect x="326.12" y="0" width="2.2" height="2"/><rect x="331.38" y="0" width="2.2" height="2"/><rect x="336.64" y="0" width="2.2" height="2"/><rect x="341.90" y="0" width="2.2" height="2"/><rect x="347.16" y="0" width="2.2" height="2"/><rect x="352.42" y="0" width="2.2" height="2"/><rect x="357.68" y="0" width="2.2" height="2"/><rect x="362.94" y="0" width="2.2" height="2"/><rect x="368.20" y="0" width="2.2" height="2"/><rect x="373.46" y="0" width="2.2" height="2"/><rect x="378.72" y="0" width="2.2" height="2"/><rect x="383.98" y="0" width="2.2" height="2"/><rect x="389.24" y="0" width="2.2" height="2"/><rect x="394.50" y="0" width="2.2" height="2"/><rect x="399.76" y="0" width="2.2" height="2"/><rect x="405.02" y="0" width="2.2" height="2"/><rect x="410.28" y="0" width="2.2" height="2"/><rect x="415.54" y="0" width="2.2" height="2"/><rect x="420.80" y="0" width="2.2" height="2"/><rect x="426.06" y="0" width="2.2" height="2"/><rect x="431.32" y="0" width="2.2" height="2"/><rect x="436.58" y="0" width="2.2" height="2"/><rect x="441.84" y="0" width="2.2" height="2"/><rect x="447.10" y="0" width="2.2" height="2"/><rect x="452.36" y="0" width="2.2" height="2"/><rect x="457.62" y="0" width="2.2" height="2"/><rect x="462.88" y="0" width="2.2" height="2"/><rect x="468.14" y="0" width="2.2" height="2"/><rect x="473.40" y="0" width="2.2" height="2"/><rect x="478.66" y="0" width="2.2" height="2"/><rect x="483.92" y="0" width="2.2" height="2"/><rect x="489.18" y="0" width="2.2" height="2"/><rect x="494.44" y="0" width="2.2" height="2"/><rect x="499.70" y="0" width="2.2" height="2"/><rect x="504.96" y="0" width="2.2" height="2"/><rect x="510.22" y="0" width="2.2" height="2"/></g></svg>
<div style="position:absolute;left:1042.00px;top:458.93px;font-family:'Liberation Sans',sans-serif;font-size:19.5px;line-height:19.5px;font-weight:400;color:#dadadc;white-space:pre;letter-spacing:1.255px;">Change color</div>
<svg style="position:absolute;left:1524px;top:456px;" width="28" height="28" viewBox="0 0 28 28"><circle cx="13.9" cy="13.6" r="12.3" stroke="#e8e8e8" stroke-width="1.5" fill="none"/><path d="M13.9 11 V21" stroke="#e8e8e8" stroke-width="1.5"/><circle cx="13.9" cy="7.6" r="1.2" fill="#e8e8e8"/></svg>
<svg style="position:absolute;left:1041.5px;top:496px;" width="33" height="33" viewBox="0 0 33 33"><rect x="3.5" y="3.5" width="24" height="24" fill="none" stroke="#e0e0e0" stroke-width="1.2" stroke-dasharray="1.4 1.6"/><rect x="1" y="1" width="5" height="5" rx="1" fill="#434248" stroke="#e0e0e0" stroke-width="1.2"/><rect x="26" y="1" width="5" height="5" rx="1" fill="#434248" stroke="#e0e0e0" stroke-width="1.2"/><rect x="1" y="26" width="5" height="5" rx="1" fill="#434248" stroke="#e0e0e0" stroke-width="1.2"/><rect x="26" y="26" width="5" height="5" rx="1" fill="#434248" stroke="#e0e0e0" stroke-width="1.2"/><path d="M9.5 10 V8.5 H21.5 V10 M15.5 8.5 V22 M12.5 22 H18.5" stroke="#e0e0e0" stroke-width="1.3" fill="none"/></svg>
<div style="position:absolute;left:1077px;top:495.8px;width:32px;height:32px;box-sizing:border-box;border-radius:50%;background:#000000;border:1px solid #6e6d72"></div>
<svg style="position:absolute;left:1126.5px;top:496px;" width="33" height="33" viewBox="0 0 33 33"><rect x="3.5" y="3.5" width="24" height="24" fill="none" stroke="#9a9a9e" stroke-width="1.4"/><rect x="7" y="7" width="17" height="17" fill="none" stroke="#9a9a9e" stroke-width="1.2"/><path d="M8 14 L14 8 M8 19 L19 8 M9 23 L23 9 M14 23 L23 14 M19 23 L23 19" stroke="#9a9a9e" stroke-width="1"/><rect x="1" y="1" width="5" height="5" rx="1" fill="#434248" stroke="#9a9a9e" stroke-width="1.2"/><rect x="26" y="1" width="5" height="5" rx="1" fill="#434248" stroke="#9a9a9e" stroke-width="1.2"/><rect x="1" y="26" width="5" height="5" rx="1" fill="#434248" stroke="#9a9a9e" stroke-width="1.2"/><rect x="26" y="26" width="5" height="5" rx="1" fill="#434248" stroke="#9a9a9e" stroke-width="1.2"/></svg>
<div style="position:absolute;left:1161.5px;top:495.8px;width:32px;height:32px;box-sizing:border-box;border-radius:50%;background:#232326;border:1px solid #6e6d72"></div>
<svg style="position:absolute;left:1211.4px;top:496px;" width="33" height="33" viewBox="0 0 33 33"><rect x="3.5" y="3.5" width="24" height="24" fill="none" stroke="#9a9a9e" stroke-width="1.4"/><rect x="1" y="1" width="5" height="5" rx="1" fill="#434248" stroke="#9a9a9e" stroke-width="1.2"/><rect x="26" y="1" width="5" height="5" rx="1" fill="#434248" stroke="#9a9a9e" stroke-width="1.2"/><rect x="1" y="26" width="5" height="5" rx="1" fill="#434248" stroke="#9a9a9e" stroke-width="1.2"/><rect x="26" y="26" width="5" height="5" rx="1" fill="#434248" stroke="#9a9a9e" stroke-width="1.2"/></svg>
<div style="position:absolute;left:1246.2px;top:495.8px;width:32px;height:32px;box-sizing:border-box;border-radius:50%;background:#232326;border:1px solid #6e6d72"></div>
<svg style="position:absolute;left:1042px;top:541.5px;" width="512" height="2" viewBox="0 0 512 2"><g fill="#c6c6c9"><rect x="0.00" y="0" width="2.2" height="2"/><rect x="5.26" y="0" width="2.2" height="2"/><rect x="10.52" y="0" width="2.2" height="2"/><rect x="15.78" y="0" width="2.2" height="2"/><rect x="21.04" y="0" width="2.2" height="2"/><rect x="26.30" y="0" width="2.2" height="2"/><rect x="31.56" y="0" width="2.2" height="2"/><rect x="36.82" y="0" width="2.2" height="2"/><rect x="42.08" y="0" width="2.2" height="2"/><rect x="47.34" y="0" width="2.2" height="2"/><rect x="52.60" y="0" width="2.2" height="2"/><rect x="57.86" y="0" width="2.2" height="2"/><rect x="63.12" y="0" width="2.2" height="2"/><rect x="68.38" y="0" width="2.2" height="2"/><rect x="73.64" y="0" width="2.2" height="2"/><rect x="78.90" y="0" width="2.2" height="2"/><rect x="84.16" y="0" width="2.2" height="2"/><rect x="89.42" y="0" width="2.2" height="2"/><rect x="94.68" y="0" width="2.2" height="2"/><rect x="99.94" y="0" width="2.2" height="2"/><rect x="105.20" y="0" width="2.2" height="2"/><rect x="110.46" y="0" width="2.2" height="2"/><rect x="115.72" y="0" width="2.2" height="2"/><rect x="120.98" y="0" width="2.2" height="2"/><rect x="126.24" y="0" width="2.2" height="2"/><rect x="131.50" y="0" width="2.2" height="2"/><rect x="136.76" y="0" width="2.2" height="2"/><rect x="142.02" y="0" width="2.2" height="2"/><rect x="147.28" y="0" width="2.2" height="2"/><rect x="152.54" y="0" width="2.2" height="2"/><rect x="157.80" y="0" width="2.2" height="2"/><rect x="163.06" y="0" width="2.2" height="2"/><rect x="168.32" y="0" width="2.2" height="2"/><rect x="173.58" y="0" width="2.2" height="2"/><rect x="178.84" y="0" width="2.2" height="2"/><rect x="184.10" y="0" width="2.2" height="2"/><rect x="189.36" y="0" width="2.2" height="2"/><rect x="194.62" y="0" width="2.2" height="2"/><rect x="199.88" y="0" width="2.2" height="2"/><rect x="205.14" y="0" width="2.2" height="2"/><rect x="210.40" y="0" width="2.2" height="2"/><rect x="215.66" y="0" width="2.2" height="2"/><rect x="220.92" y="0" width="2.2" height="2"/><rect x="226.18" y="0" width="2.2" height="2"/><rect x="231.44" y="0" width="2.2" height="2"/><rect x="236.70" y="0" width="2.2" height="2"/><rect x="241.96" y="0" width="2.2" height="2"/><rect x="247.22" y="0" width="2.2" height="2"/><rect x="252.48" y="0" width="2.2" height="2"/><rect x="257.74" y="0" width="2.2" height="2"/><rect x="263.00" y="0" width="2.2" height="2"/><rect x="268.26" y="0" width="2.2" height="2"/><rect x="273.52" y="0" width="2.2" height="2"/><rect x="278.78" y="0" width="2.2" height="2"/><rect x="284.04" y="0" width="2.2" height="2"/><rect x="289.30" y="0" width="2.2" height="2"/><rect x="294.56" y="0" width="2.2" height="2"/><rect x="299.82" y="0" width="2.2" height="2"/><rect x="305.08" y="0" width="2.2" height="2"/><rect x="310.34" y="0" width="2.2" height="2"/><rect x="315.60" y="0" width="2.2" height="2"/><rect x="320.86" y="0" width="2.2" height="2"/><rect x="326.12" y="0" width="2.2" height="2"/><rect x="331.38" y="0" width="2.2" height="2"/><rect x="336.64" y="0" width="2.2" height="2"/><rect x="341.90" y="0" width="2.2" height="2"/><rect x="347.16" y="0" width="2.2" height="2"/><rect x="352.42" y="0" width="2.2" height="2"/><rect x="357.68" y="0" width="2.2" height="2"/><rect x="362.94" y="0" width="2.2" height="2"/><rect x="368.20" y="0" width="2.2" height="2"/><rect x="373.46" y="0" width="2.2" height="2"/><rect x="378.72" y="0" width="2.2" height="2"/><rect x="383.98" y="0" width="2.2" height="2"/><rect x="389.24" y="0" width="2.2" height="2"/><rect x="394.50" y="0" width="2.2" height="2"/><rect x="399.76" y="0" width="2.2" height="2"/><rect x="405.02" y="0" width="2.2" height="2"/><rect x="410.28" y="0" width="2.2" height="2"/><rect x="415.54" y="0" width="2.2" height="2"/><rect x="420.80" y="0" width="2.2" height="2"/><rect x="426.06" y="0" width="2.2" height="2"/><rect x="431.32" y="0" width="2.2" height="2"/><rect x="436.58" y="0" width="2.2" height="2"/><rect x="441.84" y="0" width="2.2" height="2"/><rect x="447.10" y="0" width="2.2" height="2"/><rect x="452.36" y="0" width="2.2" height="2"/><rect x="457.62" y="0" width="2.2" height="2"/><rect x="462.88" y="0" width="2.2" height="2"/><rect x="468.14" y="0" width="2.2" height="2"/><rect x="473.40" y="0" width="2.2" height="2"/><rect x="478.66" y="0" width="2.2" height="2"/><rect x="483.92" y="0" width="2.2" height="2"/><rect x="489.18" y="0" width="2.2" height="2"/><rect x="494.44" y="0" width="2.2" height="2"/><rect x="499.70" y="0" width="2.2" height="2"/><rect x="504.96" y="0" width="2.2" height="2"/><rect x="510.22" y="0" width="2.2" height="2"/></g></svg>
<div style="position:absolute;left:1042.00px;top:562.62px;font-family:'Liberation Sans',sans-serif;font-size:19.5px;line-height:19.5px;font-weight:400;color:#dadadc;white-space:pre;letter-spacing:1.382px;">change transparency</div>
<div style="position:absolute;left:1042px;top:604.3px;width:427px;height:1.8px;background:#d0d0d2;"></div>
<div style="position:absolute;left:1461.8px;top:597.7px;width:15px;height:15px;box-sizing:border-box;border-radius:50%;background:#0a2cff;border:1.6px solid #f0f0f0"></div>
<div style="position:absolute;left:1528.50px;top:600.08px;font-family:'Liberation Sans',sans-serif;font-size:10.5px;line-height:10.5px;font-weight:400;color:#d8d8da;white-space:pre;letter-spacing:-0.620px;">100%</div>
<svg style="position:absolute;left:1042px;top:626.6px;" width="512" height="2" viewBox="0 0 512 2"><g fill="#c6c6c9"><rect x="0.00" y="0" width="2.2" height="2"/><rect x="5.26" y="0" width="2.2" height="2"/><rect x="10.52" y="0" width="2.2" height="2"/><rect x="15.78" y="0" width="2.2" height="2"/><rect x="21.04" y="0" width="2.2" height="2"/><rect x="26.30" y="0" width="2.2" height="2"/><rect x="31.56" y="0" width="2.2" height="2"/><rect x="36.82" y="0" width="2.2" height="2"/><rect x="42.08" y="0" width="2.2" height="2"/><rect x="47.34" y="0" width="2.2" height="2"/><rect x="52.60" y="0" width="2.2" height="2"/><rect x="57.86" y="0" width="2.2" height="2"/><rect x="63.12" y="0" width="2.2" height="2"/><rect x="68.38" y="0" width="2.2" height="2"/><rect x="73.64" y="0" width="2.2" height="2"/><rect x="78.90" y="0" width="2.2" height="2"/><rect x="84.16" y="0" width="2.2" height="2"/><rect x="89.42" y="0" width="2.2" height="2"/><rect x="94.68" y="0" width="2.2" height="2"/><rect x="99.94" y="0" width="2.2" height="2"/><rect x="105.20" y="0" width="2.2" height="2"/><rect x="110.46" y="0" width="2.2" height="2"/><rect x="115.72" y="0" width="2.2" height="2"/><rect x="120.98" y="0" width="2.2" height="2"/><rect x="126.24" y="0" width="2.2" height="2"/><rect x="131.50" y="0" width="2.2" height="2"/><rect x="136.76" y="0" width="2.2" height="2"/><rect x="142.02" y="0" width="2.2" height="2"/><rect x="147.28" y="0" width="2.2" height="2"/><rect x="152.54" y="0" width="2.2" height="2"/><rect x="157.80" y="0" width="2.2" height="2"/><rect x="163.06" y="0" width="2.2" height="2"/><rect x="168.32" y="0" width="2.2" height="2"/><rect x="173.58" y="0" width="2.2" height="2"/><rect x="178.84" y="0" width="2.2" height="2"/><rect x="184.10" y="0" width="2.2" height="2"/><rect x="189.36" y="0" width="2.2" height="2"/><rect x="194.62" y="0" width="2.2" height="2"/><rect x="199.88" y="0" width="2.2" height="2"/><rect x="205.14" y="0" width="2.2" height="2"/><rect x="210.40" y="0" width="2.2" height="2"/><rect x="215.66" y="0" width="2.2" height="2"/><rect x="220.92" y="0" width="2.2" height="2"/><rect x="226.18" y="0" width="2.2" height="2"/><rect x="231.44" y="0" width="2.2" height="2"/><rect x="236.70" y="0" width="2.2" height="2"/><rect x="241.96" y="0" width="2.2" height="2"/><rect x="247.22" y="0" width="2.2" height="2"/><rect x="252.48" y="0" width="2.2" height="2"/><rect x="257.74" y="0" width="2.2" height="2"/><rect x="263.00" y="0" width="2.2" height="2"/><rect x="268.26" y="0" width="2.2" height="2"/><rect x="273.52" y="0" width="2.2" height="2"/><rect x="278.78" y="0" width="2.2" height="2"/><rect x="284.04" y="0" width="2.2" height="2"/><rect x="289.30" y="0" width="2.2" height="2"/><rect x="294.56" y="0" width="2.2" height="2"/><rect x="299.82" y="0" width="2.2" height="2"/><rect x="305.08" y="0" width="2.2" height="2"/><rect x="310.34" y="0" width="2.2" height="2"/><rect x="315.60" y="0" width="2.2" height="2"/><rect x="320.86" y="0" width="2.2" height="2"/><rect x="326.12" y="0" width="2.2" height="2"/><rect x="331.38" y="0" width="2.2" height="2"/><rect x="336.64" y="0" width="2.2" height="2"/><rect x="341.90" y="0" width="2.2" height="2"/><rect x="347.16" y="0" width="2.2" height="2"/><rect x="352.42" y="0" width="2.2" height="2"/><rect x="357.68" y="0" width="2.2" height="2"/><rect x="362.94" y="0" width="2.2" height="2"/><rect x="368.20" y="0" width="2.2" height="2"/><rect x="373.46" y="0" width="2.2" height="2"/><rect x="378.72" y="0" width="2.2" height="2"/><rect x="383.98" y="0" width="2.2" height="2"/><rect x="389.24" y="0" width="2.2" height="2"/><rect x="394.50" y="0" width="2.2" height="2"/><rect x="399.76" y="0" width="2.2" height="2"/><rect x="405.02" y="0" width="2.2" height="2"/><rect x="410.28" y="0" width="2.2" height="2"/><rect x="415.54" y="0" width="2.2" height="2"/><rect x="420.80" y="0" width="2.2" height="2"/><rect x="426.06" y="0" width="2.2" height="2"/><rect x="431.32" y="0" width="2.2" height="2"/><rect x="436.58" y="0" width="2.2" height="2"/><rect x="441.84" y="0" width="2.2" height="2"/><rect x="447.10" y="0" width="2.2" height="2"/><rect x="452.36" y="0" width="2.2" height="2"/><rect x="457.62" y="0" width="2.2" height="2"/><rect x="462.88" y="0" width="2.2" height="2"/><rect x="468.14" y="0" width="2.2" height="2"/><rect x="473.40" y="0" width="2.2" height="2"/><rect x="478.66" y="0" width="2.2" height="2"/><rect x="483.92" y="0" width="2.2" height="2"/><rect x="489.18" y="0" width="2.2" height="2"/><rect x="494.44" y="0" width="2.2" height="2"/><rect x="499.70" y="0" width="2.2" height="2"/><rect x="504.96" y="0" width="2.2" height="2"/><rect x="510.22" y="0" width="2.2" height="2"/></g></svg>
<div style="position:absolute;left:1042.20px;top:648.12px;font-family:'Liberation Sans',sans-serif;font-size:19.5px;line-height:19.5px;font-weight:400;color:#dadadc;white-space:pre;letter-spacing:1.258px;">Align horizontally</div>
<svg style="position:absolute;left:1048px;top:689.3px;" width="20" height="19" viewBox="0 0 20 19"><g fill="#a9a9ad"><rect x="0" y="0.8" width="20" height="1.5"/><rect x="0" y="6.3" width="17" height="1.5"/><rect x="0" y="11.8" width="13" height="1.5"/><rect x="0" y="17.3" width="20" height="1.5"/></g></svg>
<svg style="position:absolute;left:1095.6px;top:689.3px;" width="20" height="19" viewBox="0 0 20 19"><g fill="#dcdcde"><rect x="0.0" y="0.8" width="20" height="1.5"/><rect x="3.0" y="6.3" width="14" height="1.5"/><rect x="3.0" y="11.8" width="14" height="1.5"/><rect x="0.0" y="17.3" width="20" height="1.5"/></g></svg>
<svg style="position:absolute;left:1143.2px;top:689.3px;" width="20" height="19" viewBox="0 0 20 19"><g fill="#dcdcde"><rect x="0" y="0.8" width="20" height="1.5"/><rect x="5" y="6.3" width="15" height="1.5"/><rect x="7" y="11.8" width="13" height="1.5"/><rect x="0" y="17.3" width="20" height="1.5"/></g></svg>
<svg style="position:absolute;left:1191px;top:689.3px;" width="20" height="19" viewBox="0 0 20 19"><g fill="#dcdcde"><rect x="0" y="0.8" width="20" height="1.5"/><rect x="0" y="6.3" width="20" height="1.5"/><rect x="0" y="11.8" width="20" height="1.5"/><rect x="0" y="17.3" width="20" height="1.5"/></g></svg>
<svg style="position:absolute;left:1042px;top:739.1px;" width="512" height="2" viewBox="0 0 512 2"><g fill="#c6c6c9"><rect x="0.00" y="0" width="2.2" height="2"/><rect x="5.26" y="0" width="2.2" height="2"/><rect x="10.52" y="0" width="2.2" height="2"/><rect x="15.78" y="0" width="2.2" height="2"/><rect x="21.04" y="0" width="2.2" height="2"/><rect x="26.30" y="0" width="2.2" height="2"/><rect x="31.56" y="0" width="2.2" height="2"/><rect x="36.82" y="0" width="2.2" height="2"/><rect x="42.08" y="0" width="2.2" height="2"/><rect x="47.34" y="0" width="2.2" height="2"/><rect x="52.60" y="0" width="2.2" height="2"/><rect x="57.86" y="0" width="2.2" height="2"/><rect x="63.12" y="0" width="2.2" height="2"/><rect x="68.38" y="0" width="2.2" height="2"/><rect x="73.64" y="0" width="2.2" height="2"/><rect x="78.90" y="0" width="2.2" height="2"/><rect x="84.16" y="0" width="2.2" height="2"/><rect x="89.42" y="0" width="2.2" height="2"/><rect x="94.68" y="0" width="2.2" height="2"/><rect x="99.94" y="0" width="2.2" height="2"/><rect x="105.20" y="0" width="2.2" height="2"/><rect x="110.46" y="0" width="2.2" height="2"/><rect x="115.72" y="0" width="2.2" height="2"/><rect x="120.98" y="0" width="2.2" height="2"/><rect x="126.24" y="0" width="2.2" height="2"/><rect x="131.50" y="0" width="2.2" height="2"/><rect x="136.76" y="0" width="2.2" height="2"/><rect x="142.02" y="0" width="2.2" height="2"/><rect x="147.28" y="0" width="2.2" height="2"/><rect x="152.54" y="0" width="2.2" height="2"/><rect x="157.80" y="0" width="2.2" height="2"/><rect x="163.06" y="0" width="2.2" height="2"/><rect x="168.32" y="0" width="2.2" height="2"/><rect x="173.58" y="0" width="2.2" height="2"/><rect x="178.84" y="0" width="2.2" height="2"/><rect x="184.10" y="0" width="2.2" height="2"/><rect x="189.36" y="0" width="2.2" height="2"/><rect x="194.62" y="0" width="2.2" height="2"/><rect x="199.88" y="0" width="2.2" height="2"/><rect x="205.14" y="0" width="2.2" height="2"/><rect x="210.40" y="0" width="2.2" height="2"/><rect x="215.66" y="0" width="2.2" height="2"/><rect x="220.92" y="0" width="2.2" height="2"/><rect x="226.18" y="0" width="2.2" height="2"/><rect x="231.44" y="0" width="2.2" height="2"/><rect x="236.70" y="0" width="2.2" height="2"/><rect x="241.96" y="0" width="2.2" height="2"/><rect x="247.22" y="0" width="2.2" height="2"/><rect x="252.48" y="0" width="2.2" height="2"/><rect x="257.74" y="0" width="2.2" height="2"/><rect x="263.00" y="0" width="2.2" height="2"/><rect x="268.26" y="0" width="2.2" height="2"/><rect x="273.52" y="0" width="2.2" height="2"/><rect x="278.78" y="0" width="2.2" height="2"/><rect x="284.04" y="0" width="2.2" height="2"/><rect x="289.30" y="0" width="2.2" height="2"/><rect x="294.56" y="0" width="2.2" height="2"/><rect x="299.82" y="0" width="2.2" height="2"/><rect x="305.08" y="0" width="2.2" height="2"/><rect x="310.34" y="0" width="2.2" height="2"/><rect x="315.60" y="0" width="2.2" height="2"/><rect x="320.86" y="0" width="2.2" height="2"/><rect x="326.12" y="0" width="2.2" height="2"/><rect x="331.38" y="0" width="2.2" height="2"/><rect x="336.64" y="0" width="2.2" height="2"/><rect x="341.90" y="0" width="2.2" height="2"/><rect x="347.16" y="0" width="2.2" height="2"/><rect x="352.42" y="0" width="2.2" height="2"/><rect x="357.68" y="0" width="2.2" height="2"/><rect x="362.94" y="0" width="2.2" height="2"/><rect x="368.20" y="0" width="2.2" height="2"/><rect x="373.46" y="0" width="2.2" height="2"/><rect x="378.72" y="0" width="2.2" height="2"/><rect x="383.98" y="0" width="2.2" height="2"/><rect x="389.24" y="0" width="2.2" height="2"/><rect x="394.50" y="0" width="2.2" height="2"/><rect x="399.76" y="0" width="2.2" height="2"/><rect x="405.02" y="0" width="2.2" height="2"/><rect x="410.28" y="0" width="2.2" height="2"/><rect x="415.54" y="0" width="2.2" height="2"/><rect x="420.80" y="0" width="2.2" height="2"/><rect x="426.06" y="0" width="2.2" height="2"/><rect x="431.32" y="0" width="2.2" height="2"/><rect x="436.58" y="0" width="2.2" height="2"/><rect x="441.84" y="0" width="2.2" height="2"/><rect x="447.10" y="0" width="2.2" height="2"/><rect x="452.36" y="0" width="2.2" height="2"/><rect x="457.62" y="0" width="2.2" height="2"/><rect x="462.88" y="0" width="2.2" height="2"/><rect x="468.14" y="0" width="2.2" height="2"/><rect x="473.40" y="0" width="2.2" height="2"/><rect x="478.66" y="0" width="2.2" height="2"/><rect x="483.92" y="0" width="2.2" height="2"/><rect x="489.18" y="0" width="2.2" height="2"/><rect x="494.44" y="0" width="2.2" height="2"/><rect x="499.70" y="0" width="2.2" height="2"/><rect x="504.96" y="0" width="2.2" height="2"/><rect x="510.22" y="0" width="2.2" height="2"/></g></svg>
<div style="position:absolute;left:1042.20px;top:760.22px;font-family:'Liberation Sans',sans-serif;font-size:19.5px;line-height:19.5px;font-weight:400;color:#dadadc;white-space:pre;letter-spacing:1.091px;">Align vertically</div>
<svg style="position:absolute;left:1048px;top:798.2px;" width="20" height="26" viewBox="0 0 20 26"><rect x="0.75" y="0.75" width="18.5" height="24" rx="1.5" fill="none" stroke="#bdbdc0" stroke-width="1.4"/><rect x="4" y="3.5" width="12" height="1.5" fill="#bdbdc0"/><rect x="4" y="7" width="12" height="1.5" fill="#bdbdc0"/><rect x="4" y="10.5" width="12" height="1.5" fill="#bdbdc0"/></svg>
<svg style="position:absolute;left:1095.6px;top:798.2px;" width="20" height="26" viewBox="0 0 20 26"><rect x="0.75" y="0.75" width="18.5" height="24" rx="1.5" fill="none" stroke="#dcdcde" stroke-width="1.4"/><rect x="4" y="8.5" width="12" height="1.5" fill="#dcdcde"/><rect x="4" y="12" width="12" height="1.5" fill="#dcdcde"/><rect x="4" y="15.5" width="12" height="1.5" fill="#dcdcde"/></svg>
<svg style="position:absolute;left:1143.2px;top:798.2px;" width="20" height="26" viewBox="0 0 20 26"><rect x="0.75" y="0.75" width="18.5" height="24" rx="1.5" fill="none" stroke="#dcdcde" stroke-width="1.4"/><rect x="4" y="15" width="12" height="1.5" fill="#dcdcde"/><rect x="4" y="18.5" width="12" height="1.5" fill="#dcdcde"/><rect x="4" y="22" width="12" height="1.5" fill="#dcdcde"/></svg>
<svg style="position:absolute;left:1042px;top:850.8px;" width="512" height="2" viewBox="0 0 512 2"><g fill="#c6c6c9"><rect x="0.00" y="0" width="2.2" height="2"/><rect x="5.26" y="0" width="2.2" height="2"/><rect x="10.52" y="0" width="2.2" height="2"/><rect x="15.78" y="0" width="2.2" height="2"/><rect x="21.04" y="0" width="2.2" height="2"/><rect x="26.30" y="0" width="2.2" height="2"/><rect x="31.56" y="0" width="2.2" height="2"/><rect x="36.82" y="0" width="2.2" height="2"/><rect x="42.08" y="0" width="2.2" height="2"/><rect x="47.34" y="0" width="2.2" height="2"/><rect x="52.60" y="0" width="2.2" height="2"/><rect x="57.86" y="0" width="2.2" height="2"/><rect x="63.12" y="0" width="2.2" height="2"/><rect x="68.38" y="0" width="2.2" height="2"/><rect x="73.64" y="0" width="2.2" height="2"/><rect x="78.90" y="0" width="2.2" height="2"/><rect x="84.16" y="0" width="2.2" height="2"/><rect x="89.42" y="0" width="2.2" height="2"/><rect x="94.68" y="0" width="2.2" height="2"/><rect x="99.94" y="0" width="2.2" height="2"/><rect x="105.20" y="0" width="2.2" height="2"/><rect x="110.46" y="0" width="2.2" height="2"/><rect x="115.72" y="0" width="2.2" height="2"/><rect x="120.98" y="0" width="2.2" height="2"/><rect x="126.24" y="0" width="2.2" height="2"/><rect x="131.50" y="0" width="2.2" height="2"/><rect x="136.76" y="0" width="2.2" height="2"/><rect x="142.02" y="0" width="2.2" height="2"/><rect x="147.28" y="0" width="2.2" height="2"/><rect x="152.54" y="0" width="2.2" height="2"/><rect x="157.80" y="0" width="2.2" height="2"/><rect x="163.06" y="0" width="2.2" height="2"/><rect x="168.32" y="0" width="2.2" height="2"/><rect x="173.58" y="0" width="2.2" height="2"/><rect x="178.84" y="0" width="2.2" height="2"/><rect x="184.10" y="0" width="2.2" height="2"/><rect x="189.36" y="0" width="2.2" height="2"/><rect x="194.62" y="0" width="2.2" height="2"/><rect x="199.88" y="0" width="2.2" height="2"/><rect x="205.14" y="0" width="2.2" height="2"/><rect x="210.40" y="0" width="2.2" height="2"/><rect x="215.66" y="0" width="2.2" height="2"/><rect x="220.92" y="0" width="2.2" height="2"/><rect x="226.18" y="0" width="2.2" height="2"/><rect x="231.44" y="0" width="2.2" height="2"/><rect x="236.70" y="0" width="2.2" height="2"/><rect x="241.96" y="0" width="2.2" height="2"/><rect x="247.22" y="0" width="2.2" height="2"/><rect x="252.48" y="0" width="2.2" height="2"/><rect x="257.74" y="0" width="2.2" height="2"/><rect x="263.00" y="0" width="2.2" height="2"/><rect x="268.26" y="0" width="2.2" height="2"/><rect x="273.52" y="0" width="2.2" height="2"/><rect x="278.78" y="0" width="2.2" height="2"/><rect x="284.04" y="0" width="2.2" height="2"/><rect x="289.30" y="0" width="2.2" height="2"/><rect x="294.56" y="0" width="2.2" height="2"/><rect x="299.82" y="0" width="2.2" height="2"/><rect x="305.08" y="0" width="2.2" height="2"/><rect x="310.34" y="0" width="2.2" height="2"/><rect x="315.60" y="0" width="2.2" height="2"/><rect x="320.86" y="0" width="2.2" height="2"/><rect x="326.12" y="0" width="2.2" height="2"/><rect x="331.38" y="0" width="2.2" height="2"/><rect x="336.64" y="0" width="2.2" height="2"/><rect x="341.90" y="0" width="2.2" height="2"/><rect x="347.16" y="0" width="2.2" height="2"/><rect x="352.42" y="0" width="2.2" height="2"/><rect x="357.68" y="0" width="2.2" height="2"/><rect x="362.94" y="0" width="2.2" height="2"/><rect x="368.20" y="0" width="2.2" height="2"/><rect x="373.46" y="0" width="2.2" height="2"/><rect x="378.72" y="0" width="2.2" height="2"/><rect x="383.98" y="0" width="2.2" height="2"/><rect x="389.24" y="0" width="2.2" height="2"/><rect x="394.50" y="0" width="2.2" height="2"/><rect x="399.76" y="0" width="2.2" height="2"/><rect x="405.02" y="0" width="2.2" height="2"/><rect x="410.28" y="0" width="2.2" height="2"/><rect x="415.54" y="0" width="2.2" height="2"/><rect x="420.80" y="0" width="2.2" height="2"/><rect x="426.06" y="0" width="2.2" height="2"/><rect x="431.32" y="0" width="2.2" height="2"/><rect x="436.58" y="0" width="2.2" height="2"/><rect x="441.84" y="0" width="2.2" height="2"/><rect x="447.10" y="0" width="2.2" height="2"/><rect x="452.36" y="0" width="2.2" height="2"/><rect x="457.62" y="0" width="2.2" height="2"/><rect x="462.88" y="0" width="2.2" height="2"/><rect x="468.14" y="0" width="2.2" height="2"/><rect x="473.40" y="0" width="2.2" height="2"/><rect x="478.66" y="0" width="2.2" height="2"/><rect x="483.92" y="0" width="2.2" height="2"/><rect x="489.18" y="0" width="2.2" height="2"/><rect x="494.44" y="0" width="2.2" height="2"/><rect x="499.70" y="0" width="2.2" height="2"/><rect x="504.96" y="0" width="2.2" height="2"/><rect x="510.22" y="0" width="2.2" height="2"/></g></svg>
<div style="position:absolute;left:1042.80px;top:872.32px;font-family:'Liberation Sans',sans-serif;font-size:19.5px;line-height:19.5px;font-weight:400;color:#dadadc;white-space:pre;letter-spacing:0.473px;">Lists</div>
<svg style="position:absolute;left:1046px;top:913px;" width="24" height="20" viewBox="0 0 24 20"><g fill="#e0e0e2"><circle cx="1.6" cy="1.6" r="1.5"/><rect x="5.5" y="0.9" width="17.4" height="1.5"/><circle cx="1.6" cy="7.199999999999999" r="1.5"/><rect x="5.5" y="6.5" width="17.4" height="1.5"/><circle cx="1.6" cy="12.799999999999999" r="1.5"/><rect x="5.5" y="12.1" width="17.4" height="1.5"/><circle cx="1.6" cy="18.4" r="1.5"/><rect x="5.5" y="17.699999999999996" width="17.4" height="1.5"/></g></svg>
<svg style="position:absolute;left:1093.5px;top:912px;" width="24" height="21" viewBox="0 0 24 21"><g fill="#e0e0e2"><rect x="6" y="1.9" width="16.8" height="1.5"/><rect x="6" y="7.5" width="16.8" height="1.5"/><rect x="6" y="13.1" width="16.8" height="1.5"/><rect x="6" y="18.699999999999996" width="16.8" height="1.5"/></g><text x="0.5" y="4.6" font-family="Liberation Sans" font-weight="700" font-size="5.5" fill="#e0e0e2">1</text><text x="0.5" y="10.2" font-family="Liberation Sans" font-weight="700" font-size="5.5" fill="#e0e0e2">2</text><text x="0.5" y="15.799999999999999" font-family="Liberation Sans" font-weight="700" font-size="5.5" fill="#e0e0e2">3</text><text x="0.5" y="21.4" font-family="Liberation Sans" font-weight="700" font-size="5.5" fill="#e0e0e2">4</text></svg>
<svg style="position:absolute;left:1042px;top:963px;" width="512" height="2" viewBox="0 0 512 2"><g fill="#c6c6c9"><rect x="0.00" y="0" width="2.2" height="2"/><rect x="5.26" y="0" width="2.2" height="2"/><rect x="10.52" y="0" width="2.2" height="2"/><rect x="15.78" y="0" width="2.2" height="2"/><rect x="21.04" y="0" width="2.2" height="2"/><rect x="26.30" y="0" width="2.2" height="2"/><rect x="31.56" y="0" width="2.2" height="2"/><rect x="36.82" y="0" width="2.2" height="2"/><rect x="42.08" y="0" width="2.2" height="2"/><rect x="47.34" y="0" width="2.2" height="2"/><rect x="52.60" y="0" width="2.2" height="2"/><rect x="57.86" y="0" width="2.2" height="2"/><rect x="63.12" y="0" width="2.2" height="2"/><rect x="68.38" y="0" width="2.2" height="2"/><rect x="73.64" y="0" width="2.2" height="2"/><rect x="78.90" y="0" width="2.2" height="2"/><rect x="84.16" y="0" width="2.2" height="2"/><rect x="89.42" y="0" width="2.2" height="2"/><rect x="94.68" y="0" width="2.2" height="2"/><rect x="99.94" y="0" width="2.2" height="2"/><rect x="105.20" y="0" width="2.2" height="2"/><rect x="110.46" y="0" width="2.2" height="2"/><rect x="115.72" y="0" width="2.2" height="2"/><rect x="120.98" y="0" width="2.2" height="2"/><rect x="126.24" y="0" width="2.2" height="2"/><rect x="131.50" y="0" width="2.2" height="2"/><rect x="136.76" y="0" width="2.2" height="2"/><rect x="142.02" y="0" width="2.2" height="2"/><rect x="147.28" y="0" width="2.2" height="2"/><rect x="152.54" y="0" width="2.2" height="2"/><rect x="157.80" y="0" width="2.2" height="2"/><rect x="163.06" y="0" width="2.2" height="2"/><rect x="168.32" y="0" width="2.2" height="2"/><rect x="173.58" y="0" width="2.2" height="2"/><rect x="178.84" y="0" width="2.2" height="2"/><rect x="184.10" y="0" width="2.2" height="2"/><rect x="189.36" y="0" width="2.2" height="2"/><rect x="194.62" y="0" width="2.2" height="2"/><rect x="199.88" y="0" width="2.2" height="2"/><rect x="205.14" y="0" width="2.2" height="2"/><rect x="210.40" y="0" width="2.2" height="2"/><rect x="215.66" y="0" width="2.2" height="2"/><rect x="220.92" y="0" width="2.2" height="2"/><rect x="226.18" y="0" width="2.2" height="2"/><rect x="231.44" y="0" width="2.2" height="2"/><rect x="236.70" y="0" width="2.2" height="2"/><rect x="241.96" y="0" width="2.2" height="2"/><rect x="247.22" y="0" width="2.2" height="2"/><rect x="252.48" y="0" width="2.2" height="2"/><rect x="257.74" y="0" width="2.2" height="2"/><rect x="263.00" y="0" width="2.2" height="2"/><rect x="268.26" y="0" width="2.2" height="2"/><rect x="273.52" y="0" width="2.2" height="2"/><rect x="278.78" y="0" width="2.2" height="2"/><rect x="284.04" y="0" width="2.2" height="2"/><rect x="289.30" y="0" width="2.2" height="2"/><rect x="294.56" y="0" width="2.2" height="2"/><rect x="299.82" y="0" width="2.2" height="2"/><rect x="305.08" y="0" width="2.2" height="2"/><rect x="310.34" y="0" width="2.2" height="2"/><rect x="315.60" y="0" width="2.2" height="2"/><rect x="320.86" y="0" width="2.2" height="2"/><rect x="326.12" y="0" width="2.2" height="2"/><rect x="331.38" y="0" width="2.2" height="2"/><rect x="336.64" y="0" width="2.2" height="2"/><rect x="341.90" y="0" width="2.2" height="2"/><rect x="347.16" y="0" width="2.2" height="2"/><rect x="352.42" y="0" width="2.2" height="2"/><rect x="357.68" y="0" width="2.2" height="2"/><rect x="362.94" y="0" width="2.2" height="2"/><rect x="368.20" y="0" width="2.2" height="2"/><rect x="373.46" y="0" width="2.2" height="2"/><rect x="378.72" y="0" width="2.2" height="2"/><rect x="383.98" y="0" width="2.2" height="2"/><rect x="389.24" y="0" width="2.2" height="2"/><rect x="394.50" y="0" width="2.2" height="2"/><rect x="399.76" y="0" width="2.2" height="2"/><rect x="405.02" y="0" width="2.2" height="2"/><rect x="410.28" y="0" width="2.2" height="2"/><rect x="415.54" y="0" width="2.2" height="2"/><rect x="420.80" y="0" width="2.2" height="2"/><rect x="426.06" y="0" width="2.2" height="2"/><rect x="431.32" y="0" width="2.2" height="2"/><rect x="436.58" y="0" width="2.2" height="2"/><rect x="441.84" y="0" width="2.2" height="2"/><rect x="447.10" y="0" width="2.2" height="2"/><rect x="452.36" y="0" width="2.2" height="2"/><rect x="457.62" y="0" width="2.2" height="2"/><rect x="462.88" y="0" width="2.2" height="2"/><rect x="468.14" y="0" width="2.2" height="2"/><rect x="473.40" y="0" width="2.2" height="2"/><rect x="478.66" y="0" width="2.2" height="2"/><rect x="483.92" y="0" width="2.2" height="2"/><rect x="489.18" y="0" width="2.2" height="2"/><rect x="494.44" y="0" width="2.2" height="2"/><rect x="499.70" y="0" width="2.2" height="2"/><rect x="504.96" y="0" width="2.2" height="2"/><rect x="510.22" y="0" width="2.2" height="2"/></g></svg>
<div style="position:absolute;left:1042.00px;top:984.22px;font-family:'Liberation Sans',sans-serif;font-size:19.5px;line-height:19.5px;font-weight:400;color:#dadadc;white-space:pre;letter-spacing:1.314px;">element size (mm)</div>
<div style="position:absolute;left:1050.40px;top:1024.28px;font-family:'Liberation Sans',sans-serif;font-size:22.5px;line-height:22.5px;font-weight:400;color:#e0e0e2;white-space:pre;letter-spacing:0.000px;transform:scaleX(0.85);transform-origin:left;">B</div>
<div style="position:absolute;left:1077.5px;top:1019.5px;width:83.5px;height:30.8px;border-radius:2px;background:#2d2c31"></div>
<div style="position:absolute;left:1087.20px;top:1028.48px;font-family:'Liberation Sans',sans-serif;font-size:13.2px;line-height:13.2px;font-weight:400;color:#f0f0f0;white-space:pre;letter-spacing:-0.504px;">30,74</div>
<svg style="position:absolute;left:1283px;top:1019px;" width="30" height="32" viewBox="0 0 30 32"><g stroke="#e0e0e2" stroke-width="1.6" fill="none"><rect x="13.9" y="5" width="13.6" height="7" rx="3.5" transform="rotate(-45 20.7 8.5)"/><rect x="2.05" y="20.1" width="13.6" height="7" rx="3.5" transform="rotate(-45 8.85 23.6)"/></g><path d="M9.24 9.39 L7.56 7.41 M7.51 11.48 L5.29 10.12 M6.07 14.25 L3.53 13.75 M22.25 18.14 L24.75 18.86 M21.43 20.56 L23.57 22.04 M19.21 23.00 L20.59 25.20" stroke="#e0e0e2" stroke-width="1.5" stroke-linecap="round"/></svg>
<div style="position:absolute;left:1442.00px;top:1024.17px;font-family:'Liberation Sans',sans-serif;font-size:22.5px;line-height:22.5px;font-weight:400;color:#e0e0e2;white-space:pre;letter-spacing:0.000px;transform:scaleX(0.8);transform-origin:left;">H</div>
<div style="position:absolute;left:1469.3px;top:1019.3px;width:84.5px;height:31.5px;border-radius:2px;background:#2d2c31"></div>
<div style="position:absolute;left:1479.50px;top:1028.48px;font-family:'Liberation Sans',sans-serif;font-size:13.2px;line-height:13.2px;font-weight:400;color:#f0f0f0;white-space:pre;letter-spacing:-0.254px;">23,60</div>
<svg style="position:absolute;left:1042px;top:1064.9px;" width="512" height="2" viewBox="0 0 512 2"><g fill="#c6c6c9"><rect x="0.00" y="0" width="2.2" height="2"/><rect x="5.26" y="0" width="2.2" height="2"/><rect x="10.52" y="0" width="2.2" height="2"/><rect x="15.78" y="0" width="2.2" height="2"/><rect x="21.04" y="0" width="2.2" height="2"/><rect x="26.30" y="0" width="2.2" height="2"/><rect x="31.56" y="0" width="2.2" height="2"/><rect x="36.82" y="0" width="2.2" height="2"/><rect x="42.08" y="0" width="2.2" height="2"/><rect x="47.34" y="0" width="2.2" height="2"/><rect x="52.60" y="0" width="2.2" height="2"/><rect x="57.86" y="0" width="2.2" height="2"/><rect x="63.12" y="0" width="2.2" height="2"/><rect x="68.38" y="0" width="2.2" height="2"/><rect x="73.64" y="0" width="2.2" height="2"/><rect x="78.90" y="0" width="2.2" height="2"/><rect x="84.16" y="0" width="2.2" height="2"/><rect x="89.42" y="0" width="2.2" height="2"/><rect x="94.68" y="0" width="2.2" height="2"/><rect x="99.94" y="0" width="2.2" height="2"/><rect x="105.20" y="0" width="2.2" height="2"/><rect x="110.46" y="0" width="2.2" height="2"/><rect x="115.72" y="0" width="2.2" height="2"/><rect x="120.98" y="0" width="2.2" height="2"/><rect x="126.24" y="0" width="2.2" height="2"/><rect x="131.50" y="0" width="2.2" height="2"/><rect x="136.76" y="0" width="2.2" height="2"/><rect x="142.02" y="0" width="2.2" height="2"/><rect x="147.28" y="0" width="2.2" height="2"/><rect x="152.54" y="0" width="2.2" height="2"/><rect x="157.80" y="0" width="2.2" height="2"/><rect x="163.06" y="0" width="2.2" height="2"/><rect x="168.32" y="0" width="2.2" height="2"/><rect x="173.58" y="0" width="2.2" height="2"/><rect x="178.84" y="0" width="2.2" height="2"/><rect x="184.10" y="0" width="2.2" height="2"/><rect x="189.36" y="0" width="2.2" height="2"/><rect x="194.62" y="0" width="2.2" height="2"/><rect x="199.88" y="0" width="2.2" height="2"/><rect x="205.14" y="0" width="2.2" height="2"/><rect x="210.40" y="0" width="2.2" height="2"/><rect x="215.66" y="0" width="2.2" height="2"/><rect x="220.92" y="0" width="2.2" height="2"/><rect x="226.18" y="0" width="2.2" height="2"/><rect x="231.44" y="0" width="2.2" height="2"/><rect x="236.70" y="0" width="2.2" height="2"/><rect x="241.96" y="0" width="2.2" height="2"/><rect x="247.22" y="0" width="2.2" height="2"/><rect x="252.48" y="0" width="2.2" height="2"/><rect x="257.74" y="0" width="2.2" height="2"/><rect x="263.00" y="0" width="2.2" height="2"/><rect x="268.26" y="0" width="2.2" height="2"/><rect x="273.52" y="0" width="2.2" height="2"/><rect x="278.78" y="0" width="2.2" height="2"/><rect x="284.04" y="0" width="2.2" height="2"/><rect x="289.30" y="0" width="2.2" height="2"/><rect x="294.56" y="0" width="2.2" height="2"/><rect x="299.82" y="0" width="2.2" height="2"/><rect x="305.08" y="0" width="2.2" height="2"/><rect x="310.34" y="0" width="2.2" height="2"/><rect x="315.60" y="0" width="2.2" height="2"/><rect x="320.86" y="0" width="2.2" height="2"/><rect x="326.12" y="0" width="2.2" height="2"/><rect x="331.38" y="0" width="2.2" height="2"/><rect x="336.64" y="0" width="2.2" height="2"/><rect x="341.90" y="0" width="2.2" height="2"/><rect x="347.16" y="0" width="2.2" height="2"/><rect x="352.42" y="0" width="2.2" height="2"/><rect x="357.68" y="0" width="2.2" height="2"/><rect x="362.94" y="0" width="2.2" height="2"/><rect x="368.20" y="0" width="2.2" height="2"/><rect x="373.46" y="0" width="2.2" height="2"/><rect x="378.72" y="0" width="2.2" height="2"/><rect x="383.98" y="0" width="2.2" height="2"/><rect x="389.24" y="0" width="2.2" height="2"/><rect x="394.50" y="0" width="2.2" height="2"/><rect x="399.76" y="0" width="2.2" height="2"/><rect x="405.02" y="0" width="2.2" height="2"/><rect x="410.28" y="0" width="2.2" height="2"/><rect x="415.54" y="0" width="2.2" height="2"/><rect x="420.80" y="0" width="2.2" height="2"/><rect x="426.06" y="0" width="2.2" height="2"/><rect x="431.32" y="0" width="2.2" height="2"/><rect x="436.58" y="0" width="2.2" height="2"/><rect x="441.84" y="0" width="2.2" height="2"/><rect x="447.10" y="0" width="2.2" height="2"/><rect x="452.36" y="0" width="2.2" height="2"/><rect x="457.62" y="0" width="2.2" height="2"/><rect x="462.88" y="0" width="2.2" height="2"/><rect x="468.14" y="0" width="2.2" height="2"/><rect x="473.40" y="0" width="2.2" height="2"/><rect x="478.66" y="0" width="2.2" height="2"/><rect x="483.92" y="0" width="2.2" height="2"/><rect x="489.18" y="0" width="2.2" height="2"/><rect x="494.44" y="0" width="2.2" height="2"/><rect x="499.70" y="0" width="2.2" height="2"/><rect x="504.96" y="0" width="2.2" height="2"/><rect x="510.22" y="0" width="2.2" height="2"/></g></svg>
<div style="position:absolute;left:1042.00px;top:1085.92px;font-family:'Liberation Sans',sans-serif;font-size:19.5px;line-height:19.5px;font-weight:400;color:#dadadc;white-space:pre;letter-spacing:1.555px;">element position (mm)</div>
<div style="position:absolute;left:1077.5px;top:1121px;width:83.5px;height:30px;border-radius:2px;background:#2d2c31"></div>
<div style="position:absolute;left:1349.5px;top:1120.5px;width:84.3px;height:30px;border-radius:2px;background:#2d2c31"></div>
<svg style="position:absolute;left:1509px;top:1080px;" width="46" height="46" viewBox="0 0 46 46"><g fill="#0a9396"><path d="M15.7 4 Q15.7 1.1 18.5 1.1 H27.2 Q30 1.1 30 4 V12.9 A7.15 7.15 0 0 1 15.7 12.9 Z"/><path d="M15.7 42.1 Q15.7 45 18.5 45 H27.2 Q30 45 30 42.1 V33.7 A7.15 7.15 0 0 0 15.7 33.7 Z"/><path d="M3.8 15.9 H12 A7.15 7.15 0 0 1 12 30.2 H3.8 Q0.9 30.2 0.9 27.3 V18.8 Q0.9 15.9 3.8 15.9 Z"/><path d="M42 15.9 H33.7 A7.15 7.15 0 0 0 33.7 30.2 H42 Q44.8 30.2 44.8 27.3 V18.8 Q44.8 15.9 42 15.9 Z"/></g><g fill="#5e6262"><path d="M21.1 10.7 L22.85 8.3 L24.6 10.7 Z"/><path d="M21.1 35.8 L22.85 38.2 L24.6 35.8 Z"/><path d="M9.7 21.4 L7.3 23.1 L9.7 24.8 Z"/><path d="M35.9 21.4 L38.3 23.1 L35.9 24.8 Z"/></g></svg>
<svg style="position:absolute;left:1603px;top:182px;" width="25" height="30" viewBox="0 0 25 30"><path d="M14 2.8 H5 Q2.8 2.8 2.8 5 V25 Q2.8 27.2 5 27.2 H19.3 Q21.5 27.2 21.5 25 V9.3" stroke="#e8e8e8" stroke-width="1.7" fill="none"/><path d="M8.2 15.2 L8.9 11.6 L17.9 3 Q19.3 1.7 20.7 3 Q22 4.4 20.7 5.8 L11.8 14.4 Z" stroke="#e8e8e8" stroke-width="1.5" fill="none" stroke-linejoin="round"/><path d="M10.5 12.5 L19 4.5" stroke="#9a9a9c" stroke-width="1"/></svg>
<div style="position:absolute;left:1604.75px;top:218.82px;font-family:'Liberation Sans',sans-serif;font-size:11.5px;line-height:11.5px;font-weight:400;color:#e4e4e6;white-space:pre;letter-spacing:0.224px;">Edit</div>
<svg style="position:absolute;left:1599.5px;top:269.5px;" width="31" height="30" viewBox="0 0 31 30"><g stroke="#e0e0e2" stroke-width="1.5" fill="none" stroke-linejoin="round"><path d="M15.5 6 Q10 2 5 3 V23.5 Q10 22.5 15.5 26.5 Q21 22.5 26 23.5 V3 Q21 2 15.5 6 Z"/><path d="M15.5 6 V26.5"/><path d="M5 6 H2 V26.5 H12.5 Q14 27.8 15.5 27.8 Q17 27.8 18.5 26.5 H29 V6 H26"/></g></svg>
<div style="position:absolute;left:1600.50px;top:306.62px;font-family:'Liberation Sans',sans-serif;font-size:11.5px;line-height:11.5px;font-weight:400;color:#e4e4e6;white-space:pre;letter-spacing:-0.902px;">Pages</div>
<svg style="position:absolute;left:1603px;top:357.5px;" width="25" height="30" viewBox="0 0 25 30"><g stroke="#e0e0e2" stroke-width="1.5" fill="none" stroke-linejoin="round"><path d="M3.2 2.9 H15.5 L21.9 9.3 V25.6 Q21.9 26.7 20.8 26.7 H3.2 Q2.1 26.7 2.1 25.6 V4 Q2.1 2.9 3.2 2.9 Z"/><path d="M2.1 10.4 H12.4 M12.4 2.9 V15.4 M2.1 15.4 H21.9 M17.4 15.4 V26.7"/></g></svg>
<div style="position:absolute;left:1568.00px;top:394.23px;font-family:'Liberation Sans',sans-serif;font-size:11.5px;line-height:11.5px;font-weight:400;color:#e4e4e6;white-space:pre;letter-spacing:-0.065px;">Catalog Templates</div>
<svg style="position:absolute;left:1600px;top:447px;" width="30" height="27" viewBox="0 0 30 27"><g stroke="#e0e0e2" stroke-width="1.5" fill="none" stroke-linejoin="round"><rect x="2" y="2" width="11" height="11" rx="1.5"/><circle cx="21.5" cy="7.5" r="5.7"/><path d="M4.5 16 H10.5 L13.5 20.5 L10.5 25 H4.5 L1.5 20.5 Z"/><path d="M21.5 15.5 L27.5 25 H15.5 Z"/></g></svg>
<div style="position:absolute;left:1600.00px;top:482.03px;font-family:'Liberation Sans',sans-serif;font-size:11.5px;line-height:11.5px;font-weight:400;color:#e4e4e6;white-space:pre;letter-spacing:-0.648px;">Forms</div>
<svg style="position:absolute;left:1600.3px;top:1086.1px;" width="31" height="31" viewBox="0 0 31 31"><g stroke="#e8e8e8" stroke-width="1.4" fill="none" stroke-linejoin="round"><circle cx="15.5" cy="15.5" r="6.9"/><path d="M14.13 5.39 L14.45 1.74 L16.55 1.74 L16.87 5.39 L18.65 5.80 L20.52 2.65 L22.42 3.56 L21.12 6.99 L22.55 8.13 L25.60 6.10 L26.91 7.74 L24.26 10.27 L25.05 11.92 L28.68 11.41 L29.15 13.46 L25.66 14.59 L25.66 16.41 L29.15 17.54 L28.68 19.59 L25.05 19.08 L24.26 20.73 L26.91 23.26 L25.60 24.90 L22.55 22.87 L21.12 24.01 L22.42 27.44 L20.52 28.35 L18.65 25.20 L16.87 25.61 L16.55 29.26 L14.45 29.26 L14.13 25.61 L12.35 25.20 L10.48 28.35 L8.58 27.44 L9.88 24.01 L8.45 22.87 L5.40 24.90 L4.09 23.26 L6.74 20.73 L5.95 19.08 L2.32 19.59 L1.85 17.54 L5.34 16.41 L5.34 14.59 L1.85 13.46 L2.32 11.41 L5.95 11.92 L6.74 10.27 L4.09 7.74 L5.40 6.10 L8.45 8.13 L9.88 6.99 L8.58 3.56 L10.48 2.65 L12.35 5.80 Z"/></g></svg>
<div style="position:absolute;left:1594.22px;top:1123.22px;font-family:'Liberation Sans',sans-serif;font-size:11.5px;line-height:11.5px;font-weight:400;color:#e4e4e6;white-space:pre;letter-spacing:0.000px;">Settings</div>
<div style="position:absolute;left:122.00px;top:23.30px;width:38.8px;height:38.4px;border-radius:50%;background:#c4005a;z-index:10"></div>
<div style="position:absolute;left:131.49px;top:28.60px;font-family:'Liberation Sans',sans-serif;font-size:28px;line-height:28px;font-weight:700;color:#ffffff;white-space:pre;letter-spacing:0.000px;z-index:11;transform:scaleX(0.92);transform-origin:center;-webkit-text-stroke:0.7px #fff;">A</div>
<div style="position:absolute;left:129.40px;top:96.10px;width:38.8px;height:38.4px;border-radius:50%;background:#c4005a;z-index:10"></div>
<div style="position:absolute;left:138.89px;top:101.40px;font-family:'Liberation Sans',sans-serif;font-size:28px;line-height:28px;font-weight:700;color:#ffffff;white-space:pre;letter-spacing:0.000px;z-index:11;transform:scaleX(0.92);transform-origin:center;-webkit-text-stroke:0.7px #fff;">D</div>
<div style="position:absolute;left:827.00px;top:104.80px;width:38.8px;height:38.4px;border-radius:50%;background:#c4005a;z-index:10"></div>
<div style="position:absolute;left:836.49px;top:110.10px;font-family:'Liberation Sans',sans-serif;font-size:28px;line-height:28px;font-weight:700;color:#ffffff;white-space:pre;letter-spacing:0.000px;z-index:11;transform:scaleX(0.92);transform-origin:center;-webkit-text-stroke:0.7px #fff;">C</div>
<div style="position:absolute;left:1110.30px;top:74.60px;width:38.8px;height:38.4px;border-radius:50%;background:#c4005a;z-index:10"></div>
<div style="position:absolute;left:1119.08px;top:79.90px;font-family:'Liberation Sans',sans-serif;font-size:28px;line-height:28px;font-weight:700;color:#ffffff;white-space:pre;letter-spacing:0.000px;z-index:11;transform:scaleX(0.92);transform-origin:center;-webkit-text-stroke:0.7px #fff;">G</div>
<div style="position:absolute;left:1359.20px;top:74.60px;width:38.8px;height:38.4px;border-radius:50%;background:#c4005a;z-index:10"></div>
<div style="position:absolute;left:1369.40px;top:79.90px;font-family:'Liberation Sans',sans-serif;font-size:28px;line-height:28px;font-weight:700;color:#ffffff;white-space:pre;letter-spacing:0.000px;z-index:11;transform:scaleX(0.92);transform-origin:center;-webkit-text-stroke:0.7px #fff;">E</div>
<div style="position:absolute;left:999.00px;top:293.20px;width:38.8px;height:38.4px;border-radius:50%;background:#c4005a;z-index:10"></div>
<div style="position:absolute;left:1009.93px;top:298.50px;font-family:'Liberation Sans',sans-serif;font-size:28px;line-height:28px;font-weight:700;color:#ffffff;white-space:pre;letter-spacing:0.000px;z-index:11;transform:scaleX(0.92);transform-origin:center;-webkit-text-stroke:0.7px #fff;">F</div>
<div style="position:absolute;left:1113.20px;top:864.80px;width:38.8px;height:38.4px;border-radius:50%;background:#c4005a;z-index:10"></div>
<div style="position:absolute;left:1122.69px;top:870.10px;font-family:'Liberation Sans',sans-serif;font-size:28px;line-height:28px;font-weight:700;color:#ffffff;white-space:pre;letter-spacing:0.000px;z-index:11;transform:scaleX(0.92);transform-origin:center;-webkit-text-stroke:0.7px #fff;">B</div>
<div style="position:absolute;left:10.20px;top:174.40px;width:38.8px;height:38.4px;border-radius:50%;background:#c4005a;z-index:10"></div>
<div style="position:absolute;left:20.40px;top:179.70px;font-family:'Liberation Sans',sans-serif;font-size:28px;line-height:28px;font-weight:700;color:#ffffff;white-space:pre;letter-spacing:0.000px;z-index:11;transform:scaleX(0.92);transform-origin:center;-webkit-text-stroke:0.7px #fff;">P</div>
<div style="position:absolute;left:280.60px;top:510.20px;width:38.8px;height:38.4px;border-radius:50%;background:#c4005a;z-index:10"></div>
<div style="position:absolute;left:295.82px;top:515.50px;font-family:'Liberation Sans',sans-serif;font-size:28px;line-height:28px;font-weight:700;color:#ffffff;white-space:pre;letter-spacing:0.000px;z-index:11;transform:scaleX(0.92);transform-origin:center;-webkit-text-stroke:0.7px #fff;">I</div>
<div style="position:absolute;left:282.90px;top:697.80px;width:38.8px;height:38.4px;border-radius:50%;background:#c4005a;z-index:10"></div>
<div style="position:absolute;left:292.39px;top:703.10px;font-family:'Liberation Sans',sans-serif;font-size:28px;line-height:28px;font-weight:700;color:#ffffff;white-space:pre;letter-spacing:0.000px;z-index:11;transform:scaleX(0.92);transform-origin:center;-webkit-text-stroke:0.7px #fff;">H</div>
<div style="position:absolute;left:224.50px;top:760.30px;width:38.8px;height:38.4px;border-radius:50%;background:#c4005a;z-index:10"></div>
<div style="position:absolute;left:236.13px;top:765.60px;font-family:'Liberation Sans',sans-serif;font-size:28px;line-height:28px;font-weight:700;color:#ffffff;white-space:pre;letter-spacing:0.000px;z-index:11;transform:scaleX(0.92);transform-origin:center;-webkit-text-stroke:0.7px #fff;">J</div></body></html>
